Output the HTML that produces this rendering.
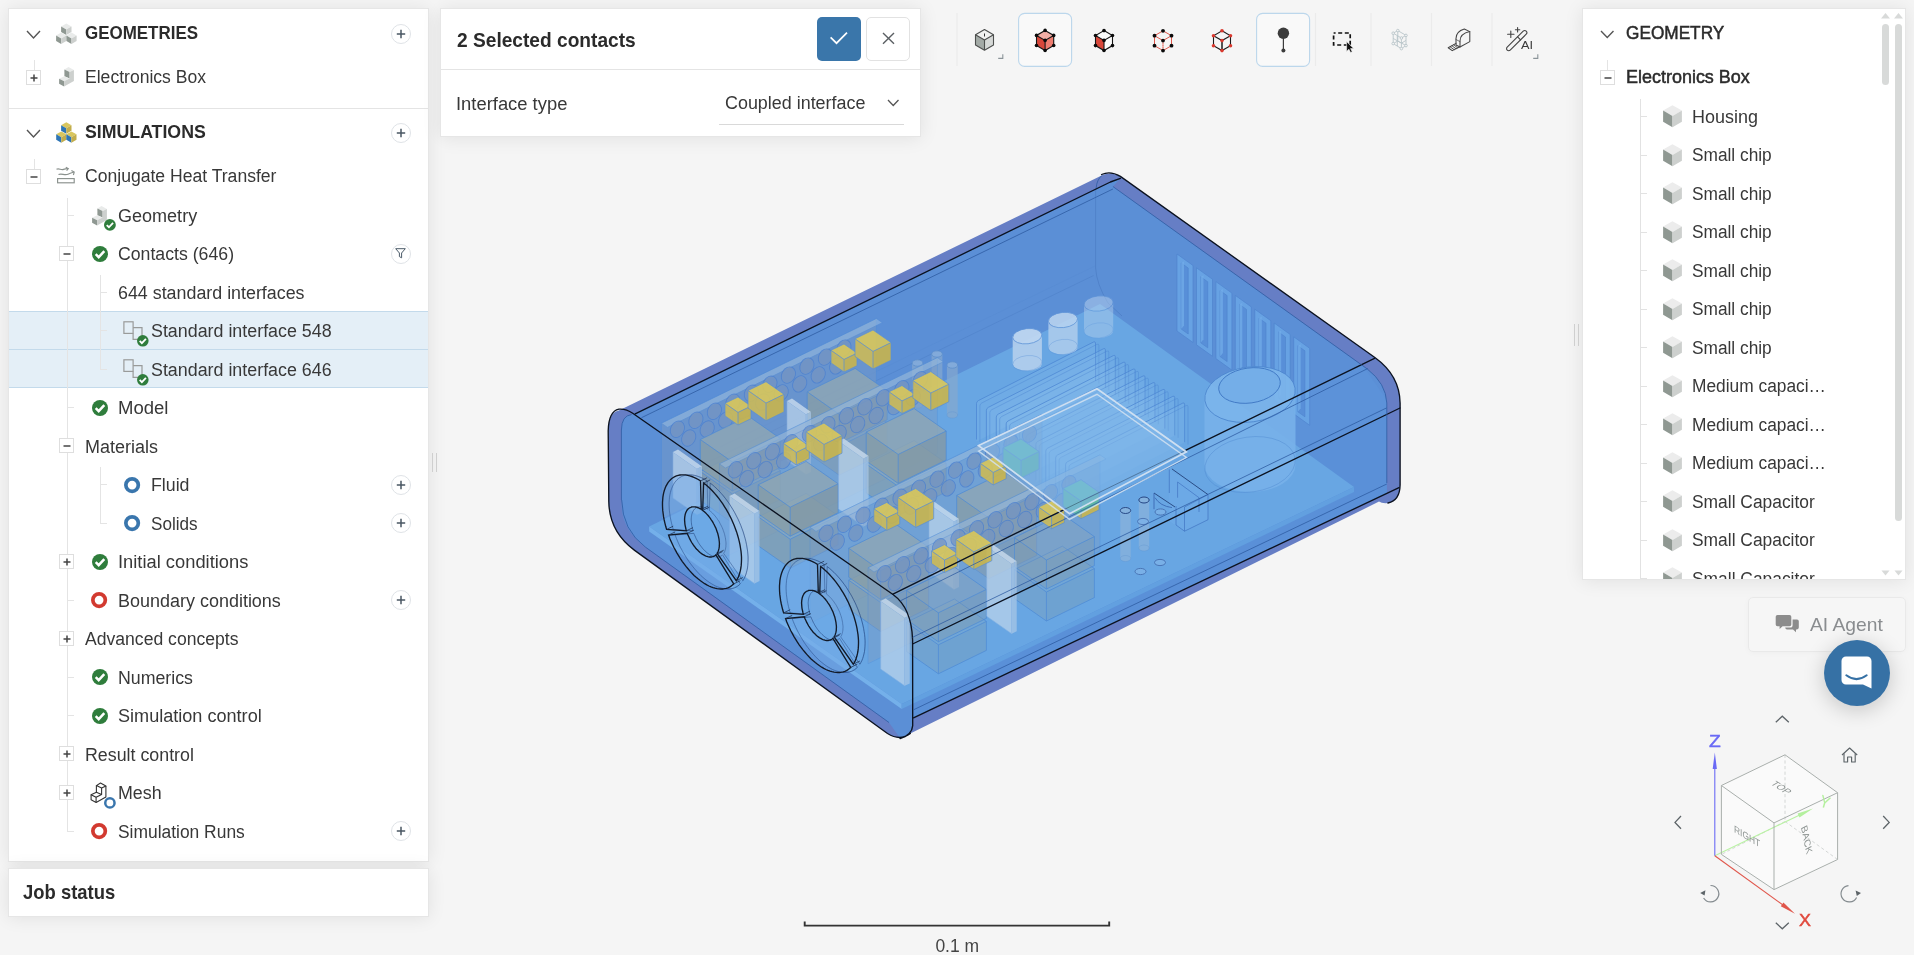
<!DOCTYPE html>
<html lang="en"><head><meta charset="utf-8"><title>Workbench</title>
<style>
html,body{margin:0;padding:0;}
body{width:1914px;height:955px;overflow:hidden;background:#f5f5f5;font-family:"Liberation Sans",sans-serif;}
#app{position:relative;width:1914px;height:955px;overflow:hidden;background:transparent;will-change:transform;}
.a,.t,.ln,.panel,.pb,.eb{position:absolute;}
.t{white-space:nowrap;line-height:1;transform-origin:0 50%;}
.panel{background:#fff;border:1px solid #e6e6e6;box-shadow:0 1px 18px rgba(0,0,0,0.085);}
.pb{width:20px;height:20px;box-sizing:border-box;border:1px solid #dfe3e7;border-radius:50%;background:#fff;}
.eb{width:15px;height:15px;box-sizing:border-box;border:1px solid #dedede;background:#fff;}
svg{display:block;overflow:visible;}

</style></head>
<body>
<div id="app">
<div class="panel" style="left:8px;top:8px;width:419px;height:852px"></div>
<div class="panel" style="left:8px;top:868px;width:419px;height:47px"></div>
<div class="ln" style="left:9px;top:108px;width:419px;height:1px;background:#e4e4e4"></div>
<div class="a" style="left:9px;top:311px;width:419px;height:39px;background:#e4eff7;border-top:1px solid #c3daeb;border-bottom:1px solid #c3daeb;box-sizing:border-box"></div>
<div class="a" style="left:9px;top:350px;width:419px;height:38px;background:#e4eff7;border-bottom:1px solid #c3daeb;box-sizing:border-box"></div>
<svg class="a" style="left:26.0px;top:29.5px" width="15" height="9" viewBox="-1 -1 15 9"><path d="M0 0 L6.5 7 L13 0" fill="none" stroke="#555" stroke-width="1.4"/></svg>
<div class="a" style="left:55px;top:23px"><svg width="22" height="21" viewBox="0 0 22 21"><polygon points="11.30,0.40 16.50,3.40 11.30,6.40 6.10,3.40" fill="#e9ebea"/><polygon points="6.10,3.40 11.30,6.40 11.30,12.00 6.10,9.00" fill="#8f9892"/><polygon points="11.30,6.40 16.50,3.40 16.50,9.00 11.30,12.00" fill="#cdd0ce"/><polygon points="6.20,9.60 11.30,12.54 6.20,15.49 1.10,12.54" fill="#e9ebea"/><polygon points="1.10,12.54 6.20,15.49 6.20,20.89 1.10,17.94" fill="#8f9892"/><polygon points="6.20,15.49 11.30,12.54 11.30,17.94 6.20,20.89" fill="#cdd0ce"/><polygon points="16.50,9.60 21.60,12.54 16.50,15.49 11.40,12.54" fill="#e9ebea"/><polygon points="11.40,12.54 16.50,15.49 16.50,20.89 11.40,17.94" fill="#8f9892"/><polygon points="16.50,15.49 21.60,12.54 21.60,17.94 16.50,20.89" fill="#cdd0ce"/></svg></div>
<span class="t" style="left:85.32px;top:24.3px;font-size:18px;transform:scaleX(0.9420);color:#2b2b2b;font-weight:700;">GEOMETRIES</span>
<div class="pb" style="left:390.5px;top:23.5px"></div><svg class="a" style="left:394.5px;top:27.5px" width="12" height="12" viewBox="-6 -6 12 12"><path d="M-4.2 0 H4.2 M0 -4.2 V4.2" stroke="#4a5763" stroke-width="1.5" fill="none"/></svg>
<div class="ln" style="left:34px;top:60px;width:1px;height:10px;background:#e4e4e4"></div>
<div class="eb" style="left:26px;top:70px"></div><svg class="a" style="left:27.5px;top:71.5px" width="12" height="12" viewBox="-6 -6 12 12"><path d="M-3.5 0 H3.5 M0 -3.5 V3.5" stroke="#444" stroke-width="1.5" fill="none"/></svg>
<div class="a" style="left:59px;top:67.3px"><svg width="16" height="20" viewBox="0 0 16 20"><polygon points="9.5,0 14.9,2.9 10.6,5.1 5.4,2.6" fill="#e9ebea"/><polygon points="5.4,2.6 10.6,5.1 10.6,11.4 5.4,9.2" fill="#8f9892"/><polygon points="0.1,11.7 5.4,9.2 10.6,11.4 5.1,14.3" fill="#e9ebea"/><polygon points="0.1,11.7 5.1,14.3 5.1,19.4 0.1,16.8" fill="#8f9892"/><polygon points="10.6,5.1 14.9,2.9 14.9,13.9 5.1,19.4 5.1,14.3 10.6,11.4" fill="#cdd0ce"/></svg></div>
<span class="t" style="left:85.16px;top:68.4px;font-size:18px;transform:scaleX(0.9755);color:#383838;">Electronics Box</span>
<svg class="a" style="left:26.0px;top:128.5px" width="15" height="9" viewBox="-1 -1 15 9"><path d="M0 0 L6.5 7 L13 0" fill="none" stroke="#555" stroke-width="1.4"/></svg>
<div class="a" style="left:55px;top:122px"><svg width="22" height="21" viewBox="0 0 22 21"><polygon points="11.30,0.20 16.50,3.20 11.30,6.20 6.10,3.20" fill="#d9c65e"/><polygon points="6.10,3.20 11.30,6.20 11.30,11.80 6.10,8.80" fill="#2e75b5"/><polygon points="11.30,6.20 16.50,3.20 16.50,8.80 11.30,11.80" fill="#c2ad4c"/><polygon points="6.30,9.40 11.40,12.34 6.30,15.29 1.20,12.34" fill="#d9c65e"/><polygon points="1.20,12.34 6.30,15.29 6.30,20.69 1.20,17.74" fill="#2e75b5"/><polygon points="6.30,15.29 11.40,12.34 11.40,17.74 6.30,20.69" fill="#c2ad4c"/><polygon points="16.40,9.40 21.50,12.34 16.40,15.29 11.30,12.34" fill="#d9c65e"/><polygon points="11.30,12.34 16.40,15.29 16.40,20.69 11.30,17.74" fill="#2e75b5"/><polygon points="16.40,15.29 21.50,12.34 21.50,17.74 16.40,20.69" fill="#c2ad4c"/></svg></div>
<span class="t" style="left:85.28px;top:123.3px;font-size:18px;transform:scaleX(0.9846);color:#2b2b2b;font-weight:700;">SIMULATIONS</span>
<div class="pb" style="left:390.5px;top:122.5px"></div><svg class="a" style="left:394.5px;top:126.5px" width="12" height="12" viewBox="-6 -6 12 12"><path d="M-4.2 0 H4.2 M0 -4.2 V4.2" stroke="#4a5763" stroke-width="1.5" fill="none"/></svg>
<div class="ln" style="left:34px;top:159px;width:1px;height:10px;background:#e4e4e4"></div>
<div class="eb" style="left:26px;top:169px"></div><svg class="a" style="left:27.5px;top:170.5px" width="12" height="12" viewBox="-6 -6 12 12"><path d="M-3.5 0 H3.5" stroke="#444" stroke-width="1.5" fill="none"/></svg>
<div class="a" style="left:56px;top:167px"><svg width="19" height="17" viewBox="0 0 19 17"><g fill="none" stroke="#8a918d" stroke-width="1.15"><path d="M0.5 2.2 C3 0.8 5 3.4 7.5 2.4 S10.5 1.4 12 1.6"/><path d="M9.8 0.3 L12.3 1.6 L10.6 3.6"/><path d="M2.5 7.6 C5.5 5.8 8.5 8.8 12 7.2 S16 5.6 18 5.2"/><path d="M15.4 3.6 L18.2 5.1 L17.4 8"/><rect x="1.6" y="11.6" width="16.6" height="4.2"/></g></svg></div>
<span class="t" style="left:85.02px;top:167.4px;font-size:18px;transform:scaleX(0.9763);color:#383838;">Conjugate Heat Transfer</span>
<div class="ln" style="left:67px;top:198px;width:1px;height:634px;background:#e4e4e4"></div>
<div class="ln" style="left:100px;top:275px;width:1px;height:95px;background:#e4e4e4"></div>
<div class="ln" style="left:100px;top:467px;width:1px;height:57px;background:#e4e4e4"></div>
<div class="ln" style="left:68px;top:215px;width:6px;height:1px;background:#e4e4e4"></div>
<div class="a" style="left:92px;top:205.5px"><svg width="16" height="20" viewBox="0 0 16 20"><polygon points="9.5,0 14.9,2.9 10.6,5.1 5.4,2.6" fill="#e9ebea"/><polygon points="5.4,2.6 10.6,5.1 10.6,11.4 5.4,9.2" fill="#8f9892"/><polygon points="0.1,11.7 5.4,9.2 10.6,11.4 5.1,14.3" fill="#e9ebea"/><polygon points="0.1,11.7 5.1,14.3 5.1,19.4 0.1,16.8" fill="#8f9892"/><polygon points="10.6,5.1 14.9,2.9 14.9,13.9 5.1,19.4 5.1,14.3 10.6,11.4" fill="#cdd0ce"/></svg></div>
<svg class="a" style="left:104.1px;top:219.1px" width="11.8" height="11.8" viewBox="-8 -8 16 16"><circle r="8" fill="#2f7d3c"/><path d="M-4.3 0.2 L-1.3 3.2 L4.3 -2.8" fill="none" stroke="#fff" stroke-width="2.5"/></svg>
<span class="t" style="left:118.00px;top:206.8px;font-size:18px;transform:scaleX(1.0016);color:#383838;">Geometry</span>
<div class="eb" style="left:59px;top:246px"></div><svg class="a" style="left:60.5px;top:247.5px" width="12" height="12" viewBox="-6 -6 12 12"><path d="M-3.5 0 H3.5" stroke="#444" stroke-width="1.5" fill="none"/></svg>
<svg class="a" style="left:91.5px;top:245.5px" width="16" height="16" viewBox="-8 -8 16 16"><circle r="8" fill="#2f7d3c"/><path d="M-4.3 0.2 L-1.3 3.2 L4.3 -2.8" fill="none" stroke="#fff" stroke-width="2.5"/></svg>
<span class="t" style="left:118.02px;top:244.8px;font-size:18px;transform:scaleX(0.9828);color:#383838;">Contacts (646)</span>
<div class="pb" style="left:390.5px;top:243.5px"></div>
<svg class="a" style="left:395px;top:248.0px" width="11" height="11" viewBox="0 0 11 11"><path d="M0.7 0.7 H10.3 L6.6 5 V9.8 L4.4 8.6 V5 Z" fill="none" stroke="#4a5a68" stroke-width="1"/></svg>
<div class="ln" style="left:101px;top:292px;width:6px;height:1px;background:#e4e4e4"></div>
<span class="t" style="left:118.13px;top:283.8px;font-size:18px;transform:scaleX(0.9913);color:#383838;">644 standard interfaces</span>
<div class="ln" style="left:101px;top:330px;width:6px;height:1px;background:#e4e4e4"></div>
<div class="a" style="left:122.5px;top:320.7px"><svg width="20" height="19" viewBox="0 0 20 19"><g fill="none" stroke="#999b9a" stroke-width="1.2"><rect x="0.9" y="0.8" width="9.2" height="11.6"/><path d="M10.1 6.6 H19 V18.3 H10.1 V12.4"/></g></svg></div>
<svg class="a" style="left:137.1px;top:335.2px" width="11.6" height="11.6" viewBox="-8 -8 16 16"><circle r="8" fill="#2f7d3c"/><path d="M-4.3 0.2 L-1.3 3.2 L4.3 -2.8" fill="none" stroke="#fff" stroke-width="2.5"/></svg>
<span class="t" style="left:150.76px;top:321.8px;font-size:18px;transform:scaleX(0.9917);color:#383838;">Standard interface 548</span>
<div class="ln" style="left:101px;top:369px;width:6px;height:1px;background:#e4e4e4"></div>
<div class="a" style="left:122.5px;top:359.2px"><svg width="20" height="19" viewBox="0 0 20 19"><g fill="none" stroke="#999b9a" stroke-width="1.2"><rect x="0.9" y="0.8" width="9.2" height="11.6"/><path d="M10.1 6.6 H19 V18.3 H10.1 V12.4"/></g></svg></div>
<svg class="a" style="left:137.1px;top:373.7px" width="11.6" height="11.6" viewBox="-8 -8 16 16"><circle r="8" fill="#2f7d3c"/><path d="M-4.3 0.2 L-1.3 3.2 L4.3 -2.8" fill="none" stroke="#fff" stroke-width="2.5"/></svg>
<span class="t" style="left:150.76px;top:360.8px;font-size:18px;transform:scaleX(0.9917);color:#383838;">Standard interface 646</span>
<div class="ln" style="left:68px;top:407px;width:6px;height:1px;background:#e4e4e4"></div>
<svg class="a" style="left:91.5px;top:399.5px" width="16" height="16" viewBox="-8 -8 16 16"><circle r="8" fill="#2f7d3c"/><path d="M-4.3 0.2 L-1.3 3.2 L4.3 -2.8" fill="none" stroke="#fff" stroke-width="2.5"/></svg>
<span class="t" style="left:118.08px;top:398.8px;font-size:18px;transform:scaleX(1.0297);color:#383838;">Model</span>
<div class="eb" style="left:59px;top:438px"></div><svg class="a" style="left:60.5px;top:439.5px" width="12" height="12" viewBox="-6 -6 12 12"><path d="M-3.5 0 H3.5" stroke="#444" stroke-width="1.5" fill="none"/></svg>
<span class="t" style="left:85.13px;top:437.8px;font-size:18px;transform:scaleX(0.9982);color:#383838;">Materials</span>
<div class="ln" style="left:101px;top:484px;width:6px;height:1px;background:#e4e4e4"></div>
<svg class="a" style="left:123.9px;top:476.9px" width="16.2" height="16.2" viewBox="-8.1 -8.1 16.2 16.2"><circle r="6.25" fill="#fff" stroke="#3a76ad" stroke-width="3.7"/></svg>
<span class="t" style="left:151.15px;top:475.8px;font-size:18px;transform:scaleX(0.9863);color:#383838;">Fluid</span>
<div class="pb" style="left:390.5px;top:474.5px"></div><svg class="a" style="left:394.5px;top:478.5px" width="12" height="12" viewBox="-6 -6 12 12"><path d="M-4.2 0 H4.2 M0 -4.2 V4.2" stroke="#4a5763" stroke-width="1.5" fill="none"/></svg>
<div class="ln" style="left:101px;top:523px;width:6px;height:1px;background:#e4e4e4"></div>
<svg class="a" style="left:123.9px;top:515.4px" width="16.2" height="16.2" viewBox="-8.1 -8.1 16.2 16.2"><circle r="6.25" fill="#fff" stroke="#3a76ad" stroke-width="3.7"/></svg>
<span class="t" style="left:150.79px;top:514.8px;font-size:18px;transform:scaleX(0.9500);color:#383838;">Solids</span>
<div class="pb" style="left:390.5px;top:513px"></div><svg class="a" style="left:394.5px;top:517px" width="12" height="12" viewBox="-6 -6 12 12"><path d="M-4.2 0 H4.2 M0 -4.2 V4.2" stroke="#4a5763" stroke-width="1.5" fill="none"/></svg>
<div class="eb" style="left:59px;top:554px"></div><svg class="a" style="left:60.5px;top:555.5px" width="12" height="12" viewBox="-6 -6 12 12"><path d="M-3.5 0 H3.5 M0 -3.5 V3.5" stroke="#444" stroke-width="1.5" fill="none"/></svg>
<svg class="a" style="left:91.5px;top:553.5px" width="16" height="16" viewBox="-8 -8 16 16"><circle r="8" fill="#2f7d3c"/><path d="M-4.3 0.2 L-1.3 3.2 L4.3 -2.8" fill="none" stroke="#fff" stroke-width="2.5"/></svg>
<span class="t" style="left:117.97px;top:552.8px;font-size:18px;transform:scaleX(1.0179);color:#383838;">Initial conditions</span>
<div class="ln" style="left:68px;top:600px;width:6px;height:1px;background:#e4e4e4"></div>
<svg class="a" style="left:91.4px;top:592.4px" width="16.2" height="16.2" viewBox="-8.1 -8.1 16.2 16.2"><circle r="6.25" fill="#fff" stroke="#d23a30" stroke-width="3.7"/></svg>
<span class="t" style="left:118.13px;top:591.8px;font-size:18px;transform:scaleX(0.9984);color:#383838;">Boundary conditions</span>
<div class="pb" style="left:390.5px;top:590px"></div><svg class="a" style="left:394.5px;top:594px" width="12" height="12" viewBox="-6 -6 12 12"><path d="M-4.2 0 H4.2 M0 -4.2 V4.2" stroke="#4a5763" stroke-width="1.5" fill="none"/></svg>
<div class="eb" style="left:59px;top:631px"></div><svg class="a" style="left:60.5px;top:632.5px" width="12" height="12" viewBox="-6 -6 12 12"><path d="M-3.5 0 H3.5 M0 -3.5 V3.5" stroke="#444" stroke-width="1.5" fill="none"/></svg>
<span class="t" style="left:85.12px;top:629.8px;font-size:18px;transform:scaleX(0.9768);color:#383838;">Advanced concepts</span>
<div class="ln" style="left:68px;top:677px;width:6px;height:1px;background:#e4e4e4"></div>
<svg class="a" style="left:91.5px;top:669px" width="16" height="16" viewBox="-8 -8 16 16"><circle r="8" fill="#2f7d3c"/><path d="M-4.3 0.2 L-1.3 3.2 L4.3 -2.8" fill="none" stroke="#fff" stroke-width="2.5"/></svg>
<span class="t" style="left:118.15px;top:668.8px;font-size:18px;transform:scaleX(0.9865);color:#383838;">Numerics</span>
<div class="ln" style="left:68px;top:715px;width:6px;height:1px;background:#e4e4e4"></div>
<svg class="a" style="left:91.5px;top:707.5px" width="16" height="16" viewBox="-8 -8 16 16"><circle r="8" fill="#2f7d3c"/><path d="M-4.3 0.2 L-1.3 3.2 L4.3 -2.8" fill="none" stroke="#fff" stroke-width="2.5"/></svg>
<span class="t" style="left:117.75px;top:706.8px;font-size:18px;transform:scaleX(1.0044);color:#383838;">Simulation control</span>
<div class="eb" style="left:59px;top:746px"></div><svg class="a" style="left:60.5px;top:747.5px" width="12" height="12" viewBox="-6 -6 12 12"><path d="M-3.5 0 H3.5 M0 -3.5 V3.5" stroke="#444" stroke-width="1.5" fill="none"/></svg>
<span class="t" style="left:85.14px;top:745.8px;font-size:18px;transform:scaleX(0.9895);color:#383838;">Result control</span>
<div class="eb" style="left:59px;top:785px"></div><svg class="a" style="left:60.5px;top:786.5px" width="12" height="12" viewBox="-6 -6 12 12"><path d="M-3.5 0 H3.5 M0 -3.5 V3.5" stroke="#444" stroke-width="1.5" fill="none"/></svg>
<div class="a" style="left:91.4px;top:783.0px"><svg width="16" height="20" viewBox="0 0 16 20"><polygon points="9.5,0 14.9,2.9 10.6,5.1 5.4,2.6" fill="none" stroke="#333" stroke-width="1.1" stroke-linejoin="round"/><polyline points="5.4,2.6 5.4,9.2" fill="none" stroke="#333" stroke-width="1.1" stroke-linejoin="round"/><polyline points="10.6,5.1 10.6,11.4" fill="none" stroke="#333" stroke-width="1.1" stroke-linejoin="round"/><polygon points="0.1,11.7 5.4,9.2 10.6,11.4 5.1,14.3" fill="none" stroke="#333" stroke-width="1.1" stroke-linejoin="round"/><polyline points="0.1,11.7 0.1,16.8 5.1,19.4 5.1,14.3" fill="none" stroke="#333" stroke-width="1.1" stroke-linejoin="round"/><polyline points="14.9,2.9 14.9,13.9 5.1,19.4" fill="none" stroke="#333" stroke-width="1.1" stroke-linejoin="round"/></svg></div>
<svg class="a" style="left:104.1px;top:797.1px" width="11.8" height="11.8" viewBox="-5.9 -5.9 11.8 11.8"><circle r="4.65" fill="#fff" stroke="#3a76ad" stroke-width="2.5"/></svg>
<span class="t" style="left:118.14px;top:783.8px;font-size:18px;transform:scaleX(0.9909);color:#383838;">Mesh</span>
<div class="ln" style="left:68px;top:831px;width:6px;height:1px;background:#e4e4e4"></div>
<svg class="a" style="left:91.4px;top:823.4px" width="16.2" height="16.2" viewBox="-8.1 -8.1 16.2 16.2"><circle r="6.25" fill="#fff" stroke="#d23a30" stroke-width="3.7"/></svg>
<span class="t" style="left:117.78px;top:822.8px;font-size:18px;transform:scaleX(0.9672);color:#383838;">Simulation Runs</span>
<div class="pb" style="left:390.5px;top:821px"></div><svg class="a" style="left:394.5px;top:825px" width="12" height="12" viewBox="-6 -6 12 12"><path d="M-4.2 0 H4.2 M0 -4.2 V4.2" stroke="#4a5763" stroke-width="1.5" fill="none"/></svg>
<span class="t" style="left:22.96px;top:882.2px;font-size:20.5px;transform:scaleX(0.8989);color:#2b2b2b;font-weight:700;">Job status</span>
<div class="ln" style="left:432px;top:453px;width:1px;height:19px;background:#cfcfcf"></div>
<div class="ln" style="left:436px;top:453px;width:1px;height:19px;background:#cfcfcf"></div>
<svg class="a" style="left:590px;top:160px" width="830" height="590" viewBox="590 160 830 590"><defs><clipPath id="wpclip"><polygon points="978.6,445.6 1097,388.8 1186.4,452 1186.4,457.5 1069.5,519.3 978.6,451.1"/></clipPath></defs><path d="M1101.6 175.6 Q1110.4 170.8 1120.4 176.4 L1375.2 357.8 Q1399.6 375.5 1400.1 403 L1400.1 485 Q1399.8 500.5 1388 503 Q1382 503.6 1379 501.6 L910.3 733.5 Q900.1 741.4 887.5 733.5 L634.3 550.1 Q609.2 531.5 608.8 501.4 L608.2 431 Q608.6 412 618.9 410.4 Z" fill="#667ec5" stroke="none" stroke-width="1" /><path d="M634 413.4 L1110.4 181.8 L1120.4 178.3 L1113 186.6 L1367.3 369 Q1386 383.5 1386.8 403 L1386.8 493 L913.5 717.8 L912.7 725.6 Q911.5 737 900.1 738.2 L889 722.5 L645.3 547 Q622.4 530 621.7 506 L621.4 430 Q621.6 415.6 631.5 414.6 Z" fill="#5b8fd6" stroke="none" stroke-width="1" /><polygon points="912.6,644.0 1386.8,414.4 1386.8,493.4 913.5,717.8" fill="#5a90d8" stroke="none" stroke-width="1" /><polygon points="893.0,593.0 1362.0,364.5 1386.8,400.0 1386.8,414.4 912.6,644.0" fill="#5c92d9" stroke="none" stroke-width="1" /><polygon points="649.2,526.5 1100.0,304.0 1354.0,487.0 901.7,704.0" fill="#68a6e3" stroke="none" stroke-width="1" /><polygon points="649.2,526.5 901.7,704.0 901.7,709.0 649.2,531.5" fill="#74b0ea" stroke="none" stroke-width="1" /><polygon points="901.7,704.0 1354.0,487.0 1354.0,492.0 901.7,709.0" fill="#62a0e0" stroke="none" stroke-width="1" /><path d="M1095.6 188 L1095.6 268 Q1096.5 284 1108 303 L1122 316" fill="none" stroke="#4a7cc4" stroke-width="0.9" opacity="0.75" /><line x1="700.0" y1="466.0" x2="1093.6" y2="275.5" stroke="#4a7cc4" stroke-width="0.8" opacity="0.55" /><line x1="720.0" y1="447.0" x2="1095.0" y2="266.0" stroke="#5387cf" stroke-width="0.7" opacity="0.4" /><polygon points="1177.0,254.0 1193.0,265.5 1193.0,342.5 1177.0,331.0" fill="#6aa6e6" stroke="#4d83cd" stroke-width="0.7" opacity="0.85" /><polygon points="1181.2,263.0 1188.2,268.0 1188.2,334.0 1181.2,329.0" fill="#588fd8" stroke="#4d83cd" stroke-width="0.6" /><polygon points="1181.2,263.0 1184.0,261.4 1184.0,325.4 1181.2,329.0" fill="#74aeea" stroke="none" stroke-width="1" opacity="0.7" /><polygon points="1196.5,267.8 1212.5,279.3 1212.5,356.3 1196.5,344.8" fill="#6aa6e6" stroke="#4d83cd" stroke-width="0.7" opacity="0.85" /><polygon points="1200.7,276.8 1207.7,281.8 1207.7,347.8 1200.7,342.8" fill="#588fd8" stroke="#4d83cd" stroke-width="0.6" /><polygon points="1200.7,276.8 1203.5,275.2 1203.5,339.2 1200.7,342.8" fill="#74aeea" stroke="none" stroke-width="1" opacity="0.7" /><polygon points="1215.9,281.6 1231.9,293.1 1231.9,370.1 1215.9,358.6" fill="#6aa6e6" stroke="#4d83cd" stroke-width="0.7" opacity="0.85" /><polygon points="1220.1,290.6 1227.1,295.6 1227.1,361.6 1220.1,356.6" fill="#588fd8" stroke="#4d83cd" stroke-width="0.6" /><polygon points="1220.1,290.6 1222.9,289.0 1222.9,353.0 1220.1,356.6" fill="#74aeea" stroke="none" stroke-width="1" opacity="0.7" /><polygon points="1235.3,295.4 1251.3,306.9 1251.3,383.9 1235.3,372.4" fill="#6aa6e6" stroke="#4d83cd" stroke-width="0.7" opacity="0.85" /><polygon points="1239.5,304.4 1246.5,309.4 1246.5,375.4 1239.5,370.4" fill="#588fd8" stroke="#4d83cd" stroke-width="0.6" /><polygon points="1239.5,304.4 1242.3,302.8 1242.3,366.8 1239.5,370.4" fill="#74aeea" stroke="none" stroke-width="1" opacity="0.7" /><polygon points="1254.8,309.2 1270.8,320.7 1270.8,397.7 1254.8,386.2" fill="#6aa6e6" stroke="#4d83cd" stroke-width="0.7" opacity="0.85" /><polygon points="1259.0,318.2 1266.0,323.2 1266.0,389.2 1259.0,384.2" fill="#588fd8" stroke="#4d83cd" stroke-width="0.6" /><polygon points="1259.0,318.2 1261.8,316.6 1261.8,380.6 1259.0,384.2" fill="#74aeea" stroke="none" stroke-width="1" opacity="0.7" /><polygon points="1274.2,323.0 1290.2,334.5 1290.2,411.5 1274.2,400.0" fill="#6aa6e6" stroke="#4d83cd" stroke-width="0.7" opacity="0.85" /><polygon points="1278.5,332.0 1285.5,337.0 1285.5,403.0 1278.5,398.0" fill="#588fd8" stroke="#4d83cd" stroke-width="0.6" /><polygon points="1278.5,332.0 1281.2,330.4 1281.2,394.4 1278.5,398.0" fill="#74aeea" stroke="none" stroke-width="1" opacity="0.7" /><polygon points="1293.7,336.8 1309.7,348.3 1309.7,425.3 1293.7,413.8" fill="#6aa6e6" stroke="#4d83cd" stroke-width="0.7" opacity="0.85" /><polygon points="1297.9,345.8 1304.9,350.8 1304.9,416.8 1297.9,411.8" fill="#588fd8" stroke="#4d83cd" stroke-width="0.6" /><polygon points="1297.9,345.8 1300.7,344.2 1300.7,408.2 1297.9,411.8" fill="#74aeea" stroke="none" stroke-width="1" opacity="0.7" /><g opacity="0.9"><path d="M1204.5 394.5 V464.5 A45.5 27.5 0 0 0 1295.5 464.5 V394.5 Z" fill="#78b2ea" stroke="none" stroke-width="1" /><ellipse cx="1250" cy="464.5" rx="45.5" ry="27.5" fill="none" stroke="#4d86cf" stroke-width="0.7200000000000001" opacity="0.6" transform="rotate(-8 1250 464.5)"/><ellipse cx="1250" cy="394.5" rx="45.5" ry="27.5" fill="#7db6ec" stroke="#4d86cf" stroke-width="0.9" transform="rotate(-8 1250 394.5)"/></g><ellipse cx="1249.5" cy="385.5" rx="31" ry="17.5" fill="#74aee8" stroke="#3f78c4" stroke-width="0.9" transform="rotate(-8 1249.5 385.5)"/><polygon points="976.5,401.5 1095.5,341.0 1095.5,381.0 976.5,441.5" fill="#9ccaf4" stroke="none" stroke-width="1" opacity="0.15" /><path d="M976.5 439.5 V403.5 Q976.5 401.5 978.5 400.5 L1093.5 342.0 Q1095.5 341.0 1095.5 343.0 V381.0" fill="none" stroke="#4a84d2" stroke-width="0.9" opacity="0.8" /><path d="M979.9 441.9 V405.9 Q979.9 403.9 981.9 402.9 L1096.9 344.4 Q1098.9 343.4 1098.9 345.4 V383.4" fill="none" stroke="#4a84d2" stroke-width="0.7" opacity="0.6" /><polygon points="986.4,408.3 1105.4,347.8 1105.4,387.8 986.4,448.3" fill="#9ccaf4" stroke="none" stroke-width="1" opacity="0.15" /><path d="M986.4 446.3 V410.3 Q986.4 408.3 988.4 407.3 L1103.4 348.8 Q1105.4 347.8 1105.4 349.8 V387.8" fill="none" stroke="#4a84d2" stroke-width="0.9" opacity="0.8" /><path d="M989.8 448.7 V412.7 Q989.8 410.7 991.8 409.7 L1106.8 351.2 Q1108.8 350.2 1108.8 352.2 V390.2" fill="none" stroke="#4a84d2" stroke-width="0.7" opacity="0.6" /><polygon points="996.3,415.1 1115.3,354.6 1115.3,394.6 996.3,455.1" fill="#9ccaf4" stroke="none" stroke-width="1" opacity="0.15" /><path d="M996.3 453.1 V417.1 Q996.3 415.1 998.3 414.1 L1113.3 355.6 Q1115.3 354.6 1115.3 356.6 V394.6" fill="none" stroke="#4a84d2" stroke-width="0.9" opacity="0.8" /><path d="M999.7 455.5 V419.5 Q999.7 417.5 1001.7 416.5 L1116.7 358.0 Q1118.7 357.0 1118.7 359.0 V397.0" fill="none" stroke="#4a84d2" stroke-width="0.7" opacity="0.6" /><polygon points="1006.2,421.9 1125.2,361.4 1125.2,401.4 1006.2,461.9" fill="#9ccaf4" stroke="none" stroke-width="1" opacity="0.15" /><path d="M1006.2 459.9 V423.9 Q1006.2 421.9 1008.2 420.9 L1123.2 362.4 Q1125.2 361.4 1125.2 363.4 V401.4" fill="none" stroke="#4a84d2" stroke-width="0.9" opacity="0.8" /><path d="M1009.6 462.3 V426.3 Q1009.6 424.3 1011.6 423.3 L1126.6 364.8 Q1128.6 363.8 1128.6 365.8 V403.8" fill="none" stroke="#4a84d2" stroke-width="0.7" opacity="0.6" /><polygon points="1016.1,428.7 1135.1,368.2 1135.1,408.2 1016.1,468.7" fill="#9ccaf4" stroke="none" stroke-width="1" opacity="0.15" /><path d="M1016.1 466.7 V430.7 Q1016.1 428.7 1018.1 427.7 L1133.1 369.2 Q1135.1 368.2 1135.1 370.2 V408.2" fill="none" stroke="#4a84d2" stroke-width="0.9" opacity="0.8" /><path d="M1019.5 469.1 V433.1 Q1019.5 431.1 1021.5 430.1 L1136.5 371.6 Q1138.5 370.6 1138.5 372.6 V410.6" fill="none" stroke="#4a84d2" stroke-width="0.7" opacity="0.6" /><polygon points="1026.0,435.5 1145.0,375.0 1145.0,415.0 1026.0,475.5" fill="#9ccaf4" stroke="none" stroke-width="1" opacity="0.15" /><path d="M1026.0 473.5 V437.5 Q1026.0 435.5 1028.0 434.5 L1143.0 376.0 Q1145.0 375.0 1145.0 377.0 V415.0" fill="none" stroke="#4a84d2" stroke-width="0.9" opacity="0.8" /><path d="M1029.4 475.9 V439.9 Q1029.4 437.9 1031.4 436.9 L1146.4 378.4 Q1148.4 377.4 1148.4 379.4 V417.4" fill="none" stroke="#4a84d2" stroke-width="0.7" opacity="0.6" /><polygon points="1035.9,442.3 1154.9,381.8 1154.9,421.8 1035.9,482.3" fill="#9ccaf4" stroke="none" stroke-width="1" opacity="0.15" /><path d="M1035.9 480.3 V444.3 Q1035.9 442.3 1037.9 441.3 L1152.9 382.8 Q1154.9 381.8 1154.9 383.8 V421.8" fill="none" stroke="#4a84d2" stroke-width="0.9" opacity="0.8" /><path d="M1039.3 482.7 V446.7 Q1039.3 444.7 1041.3 443.7 L1156.3 385.2 Q1158.3 384.2 1158.3 386.2 V424.2" fill="none" stroke="#4a84d2" stroke-width="0.7" opacity="0.6" /><polygon points="1045.8,449.1 1164.8,388.6 1164.8,428.6 1045.8,489.1" fill="#9ccaf4" stroke="none" stroke-width="1" opacity="0.15" /><path d="M1045.8 487.1 V451.1 Q1045.8 449.1 1047.8 448.1 L1162.8 389.6 Q1164.8 388.6 1164.8 390.6 V428.6" fill="none" stroke="#4a84d2" stroke-width="0.9" opacity="0.8" /><path d="M1049.2 489.5 V453.5 Q1049.2 451.5 1051.2 450.5 L1166.2 392.0 Q1168.2 391.0 1168.2 393.0 V431.0" fill="none" stroke="#4a84d2" stroke-width="0.7" opacity="0.6" /><polygon points="1055.7,455.9 1174.7,395.4 1174.7,435.4 1055.7,495.9" fill="#9ccaf4" stroke="none" stroke-width="1" opacity="0.15" /><path d="M1055.7 493.9 V457.9 Q1055.7 455.9 1057.7 454.9 L1172.7 396.4 Q1174.7 395.4 1174.7 397.4 V435.4" fill="none" stroke="#4a84d2" stroke-width="0.9" opacity="0.8" /><path d="M1059.1 496.3 V460.3 Q1059.1 458.3 1061.1 457.3 L1176.1 398.8 Q1178.1 397.8 1178.1 399.8 V437.8" fill="none" stroke="#4a84d2" stroke-width="0.7" opacity="0.6" /><polygon points="1065.6,462.7 1184.6,402.2 1184.6,442.2 1065.6,502.7" fill="#9ccaf4" stroke="none" stroke-width="1" opacity="0.15" /><path d="M1065.6 500.7 V464.7 Q1065.6 462.7 1067.6 461.7 L1182.6 403.2 Q1184.6 402.2 1184.6 404.2 V442.2" fill="none" stroke="#4a84d2" stroke-width="0.9" opacity="0.8" /><path d="M1069.0 503.1 V467.1 Q1069.0 465.1 1071.0 464.1 L1186.0 405.6 Q1188.0 404.6 1188.0 406.6 V444.6" fill="none" stroke="#4a84d2" stroke-width="0.7" opacity="0.6" /><g opacity="0.45"><path d="M1084.0 303.5 V330.5 A14.6 7.6 0 0 0 1113.1999999999998 330.5 V303.5 Z" fill="#b4d0ee" stroke="none" stroke-width="1" /><ellipse cx="1098.6" cy="330.5" rx="14.6" ry="7.6" fill="none" stroke="#5f93d6" stroke-width="0.6400000000000001" opacity="0.6" transform="rotate(-6 1098.6 330.5)"/><ellipse cx="1098.6" cy="303.5" rx="14.6" ry="7.6" fill="#c3daf2" stroke="#5f93d6" stroke-width="0.8" transform="rotate(-6 1098.6 303.5)"/></g><g opacity="0.8"><path d="M1048.4 320 V347 A14.6 7.6 0 0 0 1077.6 347 V320 Z" fill="#b4d0ee" stroke="none" stroke-width="1" /><ellipse cx="1063" cy="347" rx="14.6" ry="7.6" fill="none" stroke="#5f93d6" stroke-width="0.6400000000000001" opacity="0.6" transform="rotate(-6 1063 347)"/><ellipse cx="1063" cy="320" rx="14.6" ry="7.6" fill="#c3daf2" stroke="#5f93d6" stroke-width="0.8" transform="rotate(-6 1063 320)"/></g><g opacity="0.9"><path d="M1012.6999999999999 336.2 V363.2 A14.6 7.6 0 0 0 1041.8999999999999 363.2 V336.2 Z" fill="#b4d0ee" stroke="none" stroke-width="1" /><ellipse cx="1027.3" cy="363.2" rx="14.6" ry="7.6" fill="none" stroke="#5f93d6" stroke-width="0.6400000000000001" opacity="0.6" transform="rotate(-6 1027.3 363.2)"/><ellipse cx="1027.3" cy="336.2" rx="14.6" ry="7.6" fill="#c3daf2" stroke="#5f93d6" stroke-width="0.8" transform="rotate(-6 1027.3 336.2)"/></g><polygon points="661.4,423.2 876.4,318.5 876.4,414.5 661.4,519.2" fill="#7c9cc4" stroke="#4d8ad6" stroke-width="0.8" opacity="0.42" /><polygon points="661.4,423.2 876.4,318.5 882.4,322.7 667.4,427.4" fill="#9dc0e2" stroke="#4d8ad6" stroke-width="0.7" opacity="0.5" /><ellipse cx="677.4" cy="429.2" rx="6.7" ry="8.6" fill="#7595c2" stroke="#4a7fd0" stroke-width="0.9" opacity="0.75" transform="rotate(28 677.4 429.2)"/><ellipse cx="695.9" cy="420.2" rx="6.7" ry="8.6" fill="#7595c2" stroke="#4a7fd0" stroke-width="0.9" opacity="0.75" transform="rotate(28 695.9 420.2)"/><ellipse cx="714.4" cy="411.2" rx="6.7" ry="8.6" fill="#7595c2" stroke="#4a7fd0" stroke-width="0.9" opacity="0.75" transform="rotate(28 714.4 411.2)"/><ellipse cx="732.9" cy="402.2" rx="6.7" ry="8.6" fill="#7595c2" stroke="#4a7fd0" stroke-width="0.9" opacity="0.75" transform="rotate(28 732.9 402.2)"/><ellipse cx="751.4" cy="393.2" rx="6.7" ry="8.6" fill="#7595c2" stroke="#4a7fd0" stroke-width="0.9" opacity="0.75" transform="rotate(28 751.4 393.2)"/><ellipse cx="769.9" cy="384.2" rx="6.7" ry="8.6" fill="#7595c2" stroke="#4a7fd0" stroke-width="0.9" opacity="0.75" transform="rotate(28 769.9 384.2)"/><ellipse cx="788.4" cy="375.1" rx="6.7" ry="8.6" fill="#7595c2" stroke="#4a7fd0" stroke-width="0.9" opacity="0.75" transform="rotate(28 788.4 375.1)"/><ellipse cx="806.9" cy="366.1" rx="6.7" ry="8.6" fill="#7595c2" stroke="#4a7fd0" stroke-width="0.9" opacity="0.75" transform="rotate(28 806.9 366.1)"/><ellipse cx="825.4" cy="357.1" rx="6.7" ry="8.6" fill="#7595c2" stroke="#4a7fd0" stroke-width="0.9" opacity="0.75" transform="rotate(28 825.4 357.1)"/><ellipse cx="843.9" cy="348.1" rx="6.7" ry="8.6" fill="#7595c2" stroke="#4a7fd0" stroke-width="0.9" opacity="0.75" transform="rotate(28 843.9 348.1)"/><ellipse cx="688.7" cy="438.0" rx="6.7" ry="8.6" fill="#7595c2" stroke="#4a7fd0" stroke-width="0.9" opacity="0.75" transform="rotate(28 688.7 438.0)"/><ellipse cx="707.2" cy="429.0" rx="6.7" ry="8.6" fill="#7595c2" stroke="#4a7fd0" stroke-width="0.9" opacity="0.75" transform="rotate(28 707.2 429.0)"/><ellipse cx="725.7" cy="420.0" rx="6.7" ry="8.6" fill="#7595c2" stroke="#4a7fd0" stroke-width="0.9" opacity="0.75" transform="rotate(28 725.7 420.0)"/><ellipse cx="744.2" cy="411.0" rx="6.7" ry="8.6" fill="#7595c2" stroke="#4a7fd0" stroke-width="0.9" opacity="0.75" transform="rotate(28 744.2 411.0)"/><ellipse cx="762.7" cy="402.0" rx="6.7" ry="8.6" fill="#7595c2" stroke="#4a7fd0" stroke-width="0.9" opacity="0.75" transform="rotate(28 762.7 402.0)"/><ellipse cx="781.2" cy="392.9" rx="6.7" ry="8.6" fill="#7595c2" stroke="#4a7fd0" stroke-width="0.9" opacity="0.75" transform="rotate(28 781.2 392.9)"/><ellipse cx="799.7" cy="383.9" rx="6.7" ry="8.6" fill="#7595c2" stroke="#4a7fd0" stroke-width="0.9" opacity="0.75" transform="rotate(28 799.7 383.9)"/><ellipse cx="818.2" cy="374.9" rx="6.7" ry="8.6" fill="#7595c2" stroke="#4a7fd0" stroke-width="0.9" opacity="0.75" transform="rotate(28 818.2 374.9)"/><ellipse cx="836.7" cy="365.9" rx="6.7" ry="8.6" fill="#7595c2" stroke="#4a7fd0" stroke-width="0.9" opacity="0.75" transform="rotate(28 836.7 365.9)"/><polygon points="700.3,471.5 748.3,448.1 780.3,470.5 732.3,493.9" fill="#8ea6b4" stroke="none" stroke-width="1" opacity="0.68" /><polygon points="700.3,471.5 732.3,493.9 732.3,522.9 700.3,500.5" fill="#879da8" stroke="none" stroke-width="1" opacity="0.68" /><polygon points="732.3,493.9 780.3,470.5 780.3,499.5 732.3,522.9" fill="#8399a4" stroke="none" stroke-width="1" opacity="0.68" /><g fill="none" stroke="#4d8ad6" stroke-width="0.8" opacity="0.9" stroke-linejoin="round"><polygon points="700.3,471.5 748.3,448.1 780.3,470.5 780.3,499.5 732.3,522.9 700.3,500.5"/><polyline points="700.3,471.5 732.3,493.9 780.3,470.5"/><line x1="732.3" y1="493.9" x2="732.3" y2="522.9"/></g><polygon points="700.3,439.5 748.3,416.1 780.3,438.5 732.3,461.9" fill="#8ea6b4" stroke="none" stroke-width="1" opacity="0.8" /><polygon points="700.3,439.5 732.3,461.9 732.3,490.9 700.3,468.5" fill="#879da8" stroke="none" stroke-width="1" opacity="0.8" /><polygon points="732.3,461.9 780.3,438.5 780.3,467.5 732.3,490.9" fill="#8399a4" stroke="none" stroke-width="1" opacity="0.8" /><g fill="none" stroke="#4d8ad6" stroke-width="0.8" opacity="0.9" stroke-linejoin="round"><polygon points="700.3,439.5 748.3,416.1 780.3,438.5 780.3,467.5 732.3,490.9 700.3,468.5"/><polyline points="700.3,439.5 732.3,461.9 780.3,438.5"/><line x1="732.3" y1="461.9" x2="732.3" y2="490.9"/></g><polygon points="807.2,423.8 855.2,400.4 887.2,422.8 839.2,446.2" fill="#8ea6b4" stroke="none" stroke-width="1" opacity="0.68" /><polygon points="807.2,423.8 839.2,446.2 839.2,475.2 807.2,452.8" fill="#879da8" stroke="none" stroke-width="1" opacity="0.68" /><polygon points="839.2,446.2 887.2,422.8 887.2,451.8 839.2,475.2" fill="#8399a4" stroke="none" stroke-width="1" opacity="0.68" /><g fill="none" stroke="#4d8ad6" stroke-width="0.8" opacity="0.9" stroke-linejoin="round"><polygon points="807.2,423.8 855.2,400.4 887.2,422.8 887.2,451.8 839.2,475.2 807.2,452.8"/><polyline points="807.2,423.8 839.2,446.2 887.2,422.8"/><line x1="839.2" y1="446.2" x2="839.2" y2="475.2"/></g><polygon points="807.2,391.8 855.2,368.4 887.2,390.8 839.2,414.2" fill="#8ea6b4" stroke="none" stroke-width="1" opacity="0.8" /><polygon points="807.2,391.8 839.2,414.2 839.2,443.2 807.2,420.8" fill="#879da8" stroke="none" stroke-width="1" opacity="0.8" /><polygon points="839.2,414.2 887.2,390.8 887.2,419.8 839.2,443.2" fill="#8399a4" stroke="none" stroke-width="1" opacity="0.8" /><g fill="none" stroke="#4d8ad6" stroke-width="0.8" opacity="0.9" stroke-linejoin="round"><polygon points="807.2,391.8 855.2,368.4 887.2,390.8 887.2,419.8 839.2,443.2 807.2,420.8"/><polyline points="807.2,391.8 839.2,414.2 887.2,390.8"/><line x1="839.2" y1="414.2" x2="839.2" y2="443.2"/></g><polygon points="787.0,401.0 806.0,414.3 806.0,474.3 787.0,461.0" fill="#bcd5ec" stroke="#8db6e4" stroke-width="0.6" opacity="0.72" /><polygon points="787.0,401.0 792.0,398.6 811.0,411.9 806.0,414.3" fill="#d2e3f3" stroke="none" stroke-width="1" opacity="0.72" /><polygon points="806.0,414.3 811.0,411.9 811.0,471.9 806.0,474.3" fill="#a9c8e6" stroke="none" stroke-width="1" opacity="0.72" /><polygon points="725.0,403.3 738.0,397.0 751.0,406.1 738.0,412.4" fill="#dcc856" stroke="none" stroke-width="1" opacity="0.88" /><polygon points="725.0,403.3 738.0,412.4 738.0,425.0 725.0,415.9" fill="#cdbb55" stroke="none" stroke-width="1" opacity="0.88" /><polygon points="738.0,412.4 751.0,406.1 751.0,418.7 738.0,425.0" fill="#c9b54a" stroke="none" stroke-width="1" opacity="0.88" /><g fill="none" stroke="#5b8fd6" stroke-width="0.8" opacity="0.9" stroke-linejoin="round"><polygon points="725.0,403.3 738.0,397.0 751.0,406.1 751.0,418.7 738.0,425.0 725.0,415.9"/><polyline points="725.0,403.3 738.0,412.4 751.0,406.1"/><line x1="738.0" y1="412.4" x2="738.0" y2="425.0"/></g><polygon points="748.0,390.5 766.0,381.7 784.0,394.3 766.0,403.1" fill="#dcc856" stroke="none" stroke-width="1" opacity="0.88" /><polygon points="748.0,390.5 766.0,403.1 766.0,420.7 748.0,408.1" fill="#cdbb55" stroke="none" stroke-width="1" opacity="0.88" /><polygon points="766.0,403.1 784.0,394.3 784.0,411.9 766.0,420.7" fill="#c9b54a" stroke="none" stroke-width="1" opacity="0.88" /><g fill="none" stroke="#5b8fd6" stroke-width="0.8" opacity="0.9" stroke-linejoin="round"><polygon points="748.0,390.5 766.0,381.7 784.0,394.3 784.0,411.9 766.0,420.7 748.0,408.1"/><polyline points="748.0,390.5 766.0,403.1 784.0,394.3"/><line x1="766.0" y1="403.1" x2="766.0" y2="420.7"/></g><polygon points="831.0,350.3 844.0,344.0 857.0,353.1 844.0,359.4" fill="#dcc856" stroke="none" stroke-width="1" opacity="0.88" /><polygon points="831.0,350.3 844.0,359.4 844.0,372.0 831.0,362.9" fill="#cdbb55" stroke="none" stroke-width="1" opacity="0.88" /><polygon points="844.0,359.4 857.0,353.1 857.0,365.7 844.0,372.0" fill="#c9b54a" stroke="none" stroke-width="1" opacity="0.88" /><g fill="none" stroke="#5b8fd6" stroke-width="0.8" opacity="0.9" stroke-linejoin="round"><polygon points="831.0,350.3 844.0,344.0 857.0,353.1 857.0,365.7 844.0,372.0 831.0,362.9"/><polyline points="831.0,350.3 844.0,359.4 857.0,353.1"/><line x1="844.0" y1="359.4" x2="844.0" y2="372.0"/></g><polygon points="855.0,338.8 873.0,330.0 891.0,342.6 873.0,351.4" fill="#dcc856" stroke="none" stroke-width="1" opacity="0.88" /><polygon points="855.0,338.8 873.0,351.4 873.0,369.0 855.0,356.4" fill="#cdbb55" stroke="none" stroke-width="1" opacity="0.88" /><polygon points="873.0,351.4 891.0,342.6 891.0,360.2 873.0,369.0" fill="#c9b54a" stroke="none" stroke-width="1" opacity="0.88" /><g fill="none" stroke="#5b8fd6" stroke-width="0.8" opacity="0.9" stroke-linejoin="round"><polygon points="855.0,338.8 873.0,330.0 891.0,342.6 891.0,360.2 873.0,369.0 855.0,356.4"/><polyline points="855.0,338.8 873.0,351.4 891.0,342.6"/><line x1="873.0" y1="351.4" x2="873.0" y2="369.0"/></g><g opacity="0.7"><path d="M912.1 363 V405 A5.4 3.2 0 0 0 922.9 405 V363 Z" fill="#86a9cf" stroke="none" stroke-width="1" /><ellipse cx="917.5" cy="405" rx="5.4" ry="3.2" fill="none" stroke="#5e8fc8" stroke-width="0.6400000000000001" opacity="0.6"/><ellipse cx="917.5" cy="363" rx="5.4" ry="3.2" fill="#93b6dc" stroke="#5e8fc8" stroke-width="0.8"/></g><g opacity="0.7"><path d="M931.6 354 V404 A5.4 3.2 0 0 0 942.4 404 V354 Z" fill="#86a9cf" stroke="none" stroke-width="1" /><ellipse cx="937" cy="404" rx="5.4" ry="3.2" fill="none" stroke="#5e8fc8" stroke-width="0.6400000000000001" opacity="0.6"/><ellipse cx="937" cy="354" rx="5.4" ry="3.2" fill="#93b6dc" stroke="#5e8fc8" stroke-width="0.8"/></g><g opacity="0.7"><path d="M946.9 365 V415 A5.4 3.2 0 0 0 957.6999999999999 415 V365 Z" fill="#86a9cf" stroke="none" stroke-width="1" /><ellipse cx="952.3" cy="415" rx="5.4" ry="3.2" fill="none" stroke="#5e8fc8" stroke-width="0.6400000000000001" opacity="0.6"/><ellipse cx="952.3" cy="365" rx="5.4" ry="3.2" fill="#93b6dc" stroke="#5e8fc8" stroke-width="0.8"/></g><polygon points="673.0,452.0 697.0,468.8 697.0,514.8 673.0,498.0" fill="#bcd5ec" stroke="#8db6e4" stroke-width="0.6" opacity="0.72" /><polygon points="673.0,452.0 678.0,449.6 702.0,466.4 697.0,468.8" fill="#d2e3f3" stroke="none" stroke-width="1" opacity="0.72" /><polygon points="697.0,468.8 702.0,466.4 702.0,512.4 697.0,514.8" fill="#a9c8e6" stroke="none" stroke-width="1" opacity="0.72" /><polygon points="719.4,463.8 937.4,357.6 937.4,453.6 719.4,559.8" fill="#7c9cc4" stroke="#4d8ad6" stroke-width="0.8" opacity="0.42" /><polygon points="719.4,463.8 937.4,357.6 943.4,361.8 725.4,468.0" fill="#9dc0e2" stroke="#4d8ad6" stroke-width="0.7" opacity="0.5" /><ellipse cx="735.4" cy="469.8" rx="6.7" ry="8.6" fill="#7595c2" stroke="#4a7fd0" stroke-width="0.9" opacity="0.75" transform="rotate(28 735.4 469.8)"/><ellipse cx="753.9" cy="460.8" rx="6.7" ry="8.6" fill="#7595c2" stroke="#4a7fd0" stroke-width="0.9" opacity="0.75" transform="rotate(28 753.9 460.8)"/><ellipse cx="772.4" cy="451.8" rx="6.7" ry="8.6" fill="#7595c2" stroke="#4a7fd0" stroke-width="0.9" opacity="0.75" transform="rotate(28 772.4 451.8)"/><ellipse cx="790.9" cy="442.8" rx="6.7" ry="8.6" fill="#7595c2" stroke="#4a7fd0" stroke-width="0.9" opacity="0.75" transform="rotate(28 790.9 442.8)"/><ellipse cx="809.4" cy="433.8" rx="6.7" ry="8.6" fill="#7595c2" stroke="#4a7fd0" stroke-width="0.9" opacity="0.75" transform="rotate(28 809.4 433.8)"/><ellipse cx="827.9" cy="424.8" rx="6.7" ry="8.6" fill="#7595c2" stroke="#4a7fd0" stroke-width="0.9" opacity="0.75" transform="rotate(28 827.9 424.8)"/><ellipse cx="846.4" cy="415.7" rx="6.7" ry="8.6" fill="#7595c2" stroke="#4a7fd0" stroke-width="0.9" opacity="0.75" transform="rotate(28 846.4 415.7)"/><ellipse cx="864.9" cy="406.7" rx="6.7" ry="8.6" fill="#7595c2" stroke="#4a7fd0" stroke-width="0.9" opacity="0.75" transform="rotate(28 864.9 406.7)"/><ellipse cx="883.4" cy="397.7" rx="6.7" ry="8.6" fill="#7595c2" stroke="#4a7fd0" stroke-width="0.9" opacity="0.75" transform="rotate(28 883.4 397.7)"/><ellipse cx="901.9" cy="388.7" rx="6.7" ry="8.6" fill="#7595c2" stroke="#4a7fd0" stroke-width="0.9" opacity="0.75" transform="rotate(28 901.9 388.7)"/><ellipse cx="920.4" cy="379.7" rx="6.7" ry="8.6" fill="#7595c2" stroke="#4a7fd0" stroke-width="0.9" opacity="0.75" transform="rotate(28 920.4 379.7)"/><ellipse cx="746.7" cy="478.6" rx="6.7" ry="8.6" fill="#7595c2" stroke="#4a7fd0" stroke-width="0.9" opacity="0.75" transform="rotate(28 746.7 478.6)"/><ellipse cx="765.2" cy="469.6" rx="6.7" ry="8.6" fill="#7595c2" stroke="#4a7fd0" stroke-width="0.9" opacity="0.75" transform="rotate(28 765.2 469.6)"/><ellipse cx="783.7" cy="460.6" rx="6.7" ry="8.6" fill="#7595c2" stroke="#4a7fd0" stroke-width="0.9" opacity="0.75" transform="rotate(28 783.7 460.6)"/><ellipse cx="802.2" cy="451.6" rx="6.7" ry="8.6" fill="#7595c2" stroke="#4a7fd0" stroke-width="0.9" opacity="0.75" transform="rotate(28 802.2 451.6)"/><ellipse cx="820.7" cy="442.6" rx="6.7" ry="8.6" fill="#7595c2" stroke="#4a7fd0" stroke-width="0.9" opacity="0.75" transform="rotate(28 820.7 442.6)"/><ellipse cx="839.2" cy="433.5" rx="6.7" ry="8.6" fill="#7595c2" stroke="#4a7fd0" stroke-width="0.9" opacity="0.75" transform="rotate(28 839.2 433.5)"/><ellipse cx="857.7" cy="424.5" rx="6.7" ry="8.6" fill="#7595c2" stroke="#4a7fd0" stroke-width="0.9" opacity="0.75" transform="rotate(28 857.7 424.5)"/><ellipse cx="876.2" cy="415.5" rx="6.7" ry="8.6" fill="#7595c2" stroke="#4a7fd0" stroke-width="0.9" opacity="0.75" transform="rotate(28 876.2 415.5)"/><ellipse cx="894.7" cy="406.5" rx="6.7" ry="8.6" fill="#7595c2" stroke="#4a7fd0" stroke-width="0.9" opacity="0.75" transform="rotate(28 894.7 406.5)"/><ellipse cx="913.2" cy="397.5" rx="6.7" ry="8.6" fill="#7595c2" stroke="#4a7fd0" stroke-width="0.9" opacity="0.75" transform="rotate(28 913.2 397.5)"/><polygon points="758.2,516.8 806.2,493.4 838.2,515.8 790.2,539.2" fill="#8ea6b4" stroke="none" stroke-width="1" opacity="0.68" /><polygon points="758.2,516.8 790.2,539.2 790.2,568.2 758.2,545.8" fill="#879da8" stroke="none" stroke-width="1" opacity="0.68" /><polygon points="790.2,539.2 838.2,515.8 838.2,544.8 790.2,568.2" fill="#8399a4" stroke="none" stroke-width="1" opacity="0.68" /><g fill="none" stroke="#4d8ad6" stroke-width="0.8" opacity="0.9" stroke-linejoin="round"><polygon points="758.2,516.8 806.2,493.4 838.2,515.8 838.2,544.8 790.2,568.2 758.2,545.8"/><polyline points="758.2,516.8 790.2,539.2 838.2,515.8"/><line x1="790.2" y1="539.2" x2="790.2" y2="568.2"/></g><polygon points="758.2,484.8 806.2,461.4 838.2,483.8 790.2,507.2" fill="#8ea6b4" stroke="none" stroke-width="1" opacity="0.8" /><polygon points="758.2,484.8 790.2,507.2 790.2,536.2 758.2,513.8" fill="#879da8" stroke="none" stroke-width="1" opacity="0.8" /><polygon points="790.2,507.2 838.2,483.8 838.2,512.8 790.2,536.2" fill="#8399a4" stroke="none" stroke-width="1" opacity="0.8" /><g fill="none" stroke="#4d8ad6" stroke-width="0.8" opacity="0.9" stroke-linejoin="round"><polygon points="758.2,484.8 806.2,461.4 838.2,483.8 838.2,512.8 790.2,536.2 758.2,513.8"/><polyline points="758.2,484.8 790.2,507.2 838.2,483.8"/><line x1="790.2" y1="507.2" x2="790.2" y2="536.2"/></g><polygon points="866.2,464.0 914.2,440.6 946.2,463.0 898.2,486.4" fill="#8ea6b4" stroke="none" stroke-width="1" opacity="0.68" /><polygon points="866.2,464.0 898.2,486.4 898.2,515.4 866.2,493.0" fill="#879da8" stroke="none" stroke-width="1" opacity="0.68" /><polygon points="898.2,486.4 946.2,463.0 946.2,492.0 898.2,515.4" fill="#8399a4" stroke="none" stroke-width="1" opacity="0.68" /><g fill="none" stroke="#4d8ad6" stroke-width="0.8" opacity="0.9" stroke-linejoin="round"><polygon points="866.2,464.0 914.2,440.6 946.2,463.0 946.2,492.0 898.2,515.4 866.2,493.0"/><polyline points="866.2,464.0 898.2,486.4 946.2,463.0"/><line x1="898.2" y1="486.4" x2="898.2" y2="515.4"/></g><polygon points="866.2,432.0 914.2,408.6 946.2,431.0 898.2,454.4" fill="#8ea6b4" stroke="none" stroke-width="1" opacity="0.8" /><polygon points="866.2,432.0 898.2,454.4 898.2,483.4 866.2,461.0" fill="#879da8" stroke="none" stroke-width="1" opacity="0.8" /><polygon points="898.2,454.4 946.2,431.0 946.2,460.0 898.2,483.4" fill="#8399a4" stroke="none" stroke-width="1" opacity="0.8" /><g fill="none" stroke="#4d8ad6" stroke-width="0.8" opacity="0.9" stroke-linejoin="round"><polygon points="866.2,432.0 914.2,408.6 946.2,431.0 946.2,460.0 898.2,483.4 866.2,461.0"/><polyline points="866.2,432.0 898.2,454.4 946.2,431.0"/><line x1="898.2" y1="454.4" x2="898.2" y2="483.4"/></g><polygon points="838.6,441.0 863.6,458.5 863.6,526.5 838.6,509.0" fill="#bcd5ec" stroke="#8db6e4" stroke-width="0.6" opacity="0.72" /><polygon points="838.6,441.0 843.6,438.6 868.6,456.1 863.6,458.5" fill="#d2e3f3" stroke="none" stroke-width="1" opacity="0.72" /><polygon points="863.6,458.5 868.6,456.1 868.6,524.1 863.6,526.5" fill="#a9c8e6" stroke="none" stroke-width="1" opacity="0.72" /><polygon points="783.3,443.3 796.3,437.0 809.3,446.1 796.3,452.4" fill="#dcc856" stroke="none" stroke-width="1" opacity="0.88" /><polygon points="783.3,443.3 796.3,452.4 796.3,465.0 783.3,455.9" fill="#cdbb55" stroke="none" stroke-width="1" opacity="0.88" /><polygon points="796.3,452.4 809.3,446.1 809.3,458.7 796.3,465.0" fill="#c9b54a" stroke="none" stroke-width="1" opacity="0.88" /><g fill="none" stroke="#5b8fd6" stroke-width="0.8" opacity="0.9" stroke-linejoin="round"><polygon points="783.3,443.3 796.3,437.0 809.3,446.1 809.3,458.7 796.3,465.0 783.3,455.9"/><polyline points="783.3,443.3 796.3,452.4 809.3,446.1"/><line x1="796.3" y1="452.4" x2="796.3" y2="465.0"/></g><polygon points="806.0,431.8 824.0,423.0 842.0,435.6 824.0,444.4" fill="#dcc856" stroke="none" stroke-width="1" opacity="0.88" /><polygon points="806.0,431.8 824.0,444.4 824.0,462.0 806.0,449.4" fill="#cdbb55" stroke="none" stroke-width="1" opacity="0.88" /><polygon points="824.0,444.4 842.0,435.6 842.0,453.2 824.0,462.0" fill="#c9b54a" stroke="none" stroke-width="1" opacity="0.88" /><g fill="none" stroke="#5b8fd6" stroke-width="0.8" opacity="0.9" stroke-linejoin="round"><polygon points="806.0,431.8 824.0,423.0 842.0,435.6 842.0,453.2 824.0,462.0 806.0,449.4"/><polyline points="806.0,431.8 824.0,444.4 842.0,435.6"/><line x1="824.0" y1="444.4" x2="824.0" y2="462.0"/></g><polygon points="889.0,391.8 902.0,385.5 915.0,394.6 902.0,400.9" fill="#dcc856" stroke="none" stroke-width="1" opacity="0.88" /><polygon points="889.0,391.8 902.0,400.9 902.0,413.5 889.0,404.4" fill="#cdbb55" stroke="none" stroke-width="1" opacity="0.88" /><polygon points="902.0,400.9 915.0,394.6 915.0,407.2 902.0,413.5" fill="#c9b54a" stroke="none" stroke-width="1" opacity="0.88" /><g fill="none" stroke="#5b8fd6" stroke-width="0.8" opacity="0.9" stroke-linejoin="round"><polygon points="889.0,391.8 902.0,385.5 915.0,394.6 915.0,407.2 902.0,413.5 889.0,404.4"/><polyline points="889.0,391.8 902.0,400.9 915.0,394.6"/><line x1="902.0" y1="400.9" x2="902.0" y2="413.5"/></g><polygon points="912.8,380.4 930.8,371.6 948.8,384.2 930.8,393.0" fill="#dcc856" stroke="none" stroke-width="1" opacity="0.88" /><polygon points="912.8,380.4 930.8,393.0 930.8,410.6 912.8,398.0" fill="#cdbb55" stroke="none" stroke-width="1" opacity="0.88" /><polygon points="930.8,393.0 948.8,384.2 948.8,401.8 930.8,410.6" fill="#c9b54a" stroke="none" stroke-width="1" opacity="0.88" /><g fill="none" stroke="#5b8fd6" stroke-width="0.8" opacity="0.9" stroke-linejoin="round"><polygon points="912.8,380.4 930.8,371.6 948.8,384.2 948.8,401.8 930.8,410.6 912.8,398.0"/><polyline points="912.8,380.4 930.8,393.0 948.8,384.2"/><line x1="930.8" y1="393.0" x2="930.8" y2="410.6"/></g><polygon points="729.5,496.0 754.5,513.5 754.5,583.5 729.5,566.0" fill="#bcd5ec" stroke="#8db6e4" stroke-width="0.6" opacity="0.72" /><polygon points="729.5,496.0 734.5,493.6 759.5,511.1 754.5,513.5" fill="#d2e3f3" stroke="none" stroke-width="1" opacity="0.72" /><polygon points="754.5,513.5 759.5,511.1 759.5,581.1 754.5,583.5" fill="#a9c8e6" stroke="none" stroke-width="1" opacity="0.72" /><polygon points="810.0,527.2 1042.0,414.2 1042.0,510.2 810.0,623.2" fill="#7c9cc4" stroke="#4d8ad6" stroke-width="0.8" opacity="0.42" /><polygon points="810.0,527.2 1042.0,414.2 1048.0,418.4 816.0,531.4" fill="#9dc0e2" stroke="#4d8ad6" stroke-width="0.7" opacity="0.5" /><ellipse cx="826.0" cy="533.2" rx="6.7" ry="8.6" fill="#7595c2" stroke="#4a7fd0" stroke-width="0.9" opacity="0.75" transform="rotate(28 826.0 533.2)"/><ellipse cx="844.5" cy="524.2" rx="6.7" ry="8.6" fill="#7595c2" stroke="#4a7fd0" stroke-width="0.9" opacity="0.75" transform="rotate(28 844.5 524.2)"/><ellipse cx="863.0" cy="515.2" rx="6.7" ry="8.6" fill="#7595c2" stroke="#4a7fd0" stroke-width="0.9" opacity="0.75" transform="rotate(28 863.0 515.2)"/><ellipse cx="881.5" cy="506.2" rx="6.7" ry="8.6" fill="#7595c2" stroke="#4a7fd0" stroke-width="0.9" opacity="0.75" transform="rotate(28 881.5 506.2)"/><ellipse cx="900.0" cy="497.2" rx="6.7" ry="8.6" fill="#7595c2" stroke="#4a7fd0" stroke-width="0.9" opacity="0.75" transform="rotate(28 900.0 497.2)"/><ellipse cx="918.5" cy="488.2" rx="6.7" ry="8.6" fill="#7595c2" stroke="#4a7fd0" stroke-width="0.9" opacity="0.75" transform="rotate(28 918.5 488.2)"/><ellipse cx="937.0" cy="479.1" rx="6.7" ry="8.6" fill="#7595c2" stroke="#4a7fd0" stroke-width="0.9" opacity="0.75" transform="rotate(28 937.0 479.1)"/><ellipse cx="955.5" cy="470.1" rx="6.7" ry="8.6" fill="#7595c2" stroke="#4a7fd0" stroke-width="0.9" opacity="0.75" transform="rotate(28 955.5 470.1)"/><ellipse cx="974.0" cy="461.1" rx="6.7" ry="8.6" fill="#7595c2" stroke="#4a7fd0" stroke-width="0.9" opacity="0.75" transform="rotate(28 974.0 461.1)"/><ellipse cx="992.5" cy="452.1" rx="6.7" ry="8.6" fill="#7595c2" stroke="#4a7fd0" stroke-width="0.9" opacity="0.75" transform="rotate(28 992.5 452.1)"/><ellipse cx="1011.0" cy="443.1" rx="6.7" ry="8.6" fill="#7595c2" stroke="#4a7fd0" stroke-width="0.9" opacity="0.75" transform="rotate(28 1011.0 443.1)"/><ellipse cx="1029.5" cy="434.1" rx="6.7" ry="8.6" fill="#7595c2" stroke="#4a7fd0" stroke-width="0.9" opacity="0.75" transform="rotate(28 1029.5 434.1)"/><ellipse cx="837.3" cy="542.0" rx="6.7" ry="8.6" fill="#7595c2" stroke="#4a7fd0" stroke-width="0.9" opacity="0.75" transform="rotate(28 837.3 542.0)"/><ellipse cx="855.8" cy="533.0" rx="6.7" ry="8.6" fill="#7595c2" stroke="#4a7fd0" stroke-width="0.9" opacity="0.75" transform="rotate(28 855.8 533.0)"/><ellipse cx="874.3" cy="524.0" rx="6.7" ry="8.6" fill="#7595c2" stroke="#4a7fd0" stroke-width="0.9" opacity="0.75" transform="rotate(28 874.3 524.0)"/><ellipse cx="892.8" cy="515.0" rx="6.7" ry="8.6" fill="#7595c2" stroke="#4a7fd0" stroke-width="0.9" opacity="0.75" transform="rotate(28 892.8 515.0)"/><ellipse cx="911.3" cy="506.0" rx="6.7" ry="8.6" fill="#7595c2" stroke="#4a7fd0" stroke-width="0.9" opacity="0.75" transform="rotate(28 911.3 506.0)"/><ellipse cx="929.8" cy="496.9" rx="6.7" ry="8.6" fill="#7595c2" stroke="#4a7fd0" stroke-width="0.9" opacity="0.75" transform="rotate(28 929.8 496.9)"/><ellipse cx="948.3" cy="487.9" rx="6.7" ry="8.6" fill="#7595c2" stroke="#4a7fd0" stroke-width="0.9" opacity="0.75" transform="rotate(28 948.3 487.9)"/><ellipse cx="966.8" cy="478.9" rx="6.7" ry="8.6" fill="#7595c2" stroke="#4a7fd0" stroke-width="0.9" opacity="0.75" transform="rotate(28 966.8 478.9)"/><ellipse cx="985.3" cy="469.9" rx="6.7" ry="8.6" fill="#7595c2" stroke="#4a7fd0" stroke-width="0.9" opacity="0.75" transform="rotate(28 985.3 469.9)"/><ellipse cx="1003.8" cy="460.9" rx="6.7" ry="8.6" fill="#7595c2" stroke="#4a7fd0" stroke-width="0.9" opacity="0.75" transform="rotate(28 1003.8 460.9)"/><ellipse cx="1022.3" cy="451.9" rx="6.7" ry="8.6" fill="#7595c2" stroke="#4a7fd0" stroke-width="0.9" opacity="0.75" transform="rotate(28 1022.3 451.9)"/><polygon points="848.7,580.2 896.7,556.8 928.7,579.2 880.7,602.6" fill="#8ea6b4" stroke="none" stroke-width="1" opacity="0.68" /><polygon points="848.7,580.2 880.7,602.6 880.7,631.6 848.7,609.2" fill="#879da8" stroke="none" stroke-width="1" opacity="0.68" /><polygon points="880.7,602.6 928.7,579.2 928.7,608.2 880.7,631.6" fill="#8399a4" stroke="none" stroke-width="1" opacity="0.68" /><g fill="none" stroke="#4d8ad6" stroke-width="0.8" opacity="0.9" stroke-linejoin="round"><polygon points="848.7,580.2 896.7,556.8 928.7,579.2 928.7,608.2 880.7,631.6 848.7,609.2"/><polyline points="848.7,580.2 880.7,602.6 928.7,579.2"/><line x1="880.7" y1="602.6" x2="880.7" y2="631.6"/></g><polygon points="848.7,548.2 896.7,524.8 928.7,547.2 880.7,570.6" fill="#8ea6b4" stroke="none" stroke-width="1" opacity="0.8" /><polygon points="848.7,548.2 880.7,570.6 880.7,599.6 848.7,577.2" fill="#879da8" stroke="none" stroke-width="1" opacity="0.8" /><polygon points="880.7,570.6 928.7,547.2 928.7,576.2 880.7,599.6" fill="#8399a4" stroke="none" stroke-width="1" opacity="0.8" /><g fill="none" stroke="#4d8ad6" stroke-width="0.8" opacity="0.9" stroke-linejoin="round"><polygon points="848.7,548.2 896.7,524.8 928.7,547.2 928.7,576.2 880.7,599.6 848.7,577.2"/><polyline points="848.7,548.2 880.7,570.6 928.7,547.2"/><line x1="880.7" y1="570.6" x2="880.7" y2="599.6"/></g><polygon points="956.7,527.4 1004.7,504.0 1036.7,526.4 988.7,549.8" fill="#8ea6b4" stroke="none" stroke-width="1" opacity="0.68" /><polygon points="956.7,527.4 988.7,549.8 988.7,578.8 956.7,556.4" fill="#879da8" stroke="none" stroke-width="1" opacity="0.68" /><polygon points="988.7,549.8 1036.7,526.4 1036.7,555.4 988.7,578.8" fill="#8399a4" stroke="none" stroke-width="1" opacity="0.68" /><g fill="none" stroke="#4d8ad6" stroke-width="0.8" opacity="0.9" stroke-linejoin="round"><polygon points="956.7,527.4 1004.7,504.0 1036.7,526.4 1036.7,555.4 988.7,578.8 956.7,556.4"/><polyline points="956.7,527.4 988.7,549.8 1036.7,526.4"/><line x1="988.7" y1="549.8" x2="988.7" y2="578.8"/></g><polygon points="956.7,495.4 1004.7,472.0 1036.7,494.4 988.7,517.8" fill="#8ea6b4" stroke="none" stroke-width="1" opacity="0.8" /><polygon points="956.7,495.4 988.7,517.8 988.7,546.8 956.7,524.4" fill="#879da8" stroke="none" stroke-width="1" opacity="0.8" /><polygon points="988.7,517.8 1036.7,494.4 1036.7,523.4 988.7,546.8" fill="#8399a4" stroke="none" stroke-width="1" opacity="0.8" /><g fill="none" stroke="#4d8ad6" stroke-width="0.8" opacity="0.9" stroke-linejoin="round"><polygon points="956.7,495.4 1004.7,472.0 1036.7,494.4 1036.7,523.4 988.7,546.8 956.7,524.4"/><polyline points="956.7,495.4 988.7,517.8 1036.7,494.4"/><line x1="988.7" y1="517.8" x2="988.7" y2="546.8"/></g><polygon points="929.0,504.0 954.0,521.5 954.0,589.5 929.0,572.0" fill="#bcd5ec" stroke="#8db6e4" stroke-width="0.6" opacity="0.72" /><polygon points="929.0,504.0 934.0,501.6 959.0,519.1 954.0,521.5" fill="#d2e3f3" stroke="none" stroke-width="1" opacity="0.72" /><polygon points="954.0,521.5 959.0,519.1 959.0,587.1 954.0,589.5" fill="#a9c8e6" stroke="none" stroke-width="1" opacity="0.72" /><polygon points="873.8,508.7 886.8,502.4 899.8,511.5 886.8,517.8" fill="#dcc856" stroke="none" stroke-width="1" opacity="0.88" /><polygon points="873.8,508.7 886.8,517.8 886.8,530.4 873.8,521.3" fill="#cdbb55" stroke="none" stroke-width="1" opacity="0.88" /><polygon points="886.8,517.8 899.8,511.5 899.8,524.1 886.8,530.4" fill="#c9b54a" stroke="none" stroke-width="1" opacity="0.88" /><g fill="none" stroke="#5b8fd6" stroke-width="0.8" opacity="0.9" stroke-linejoin="round"><polygon points="873.8,508.7 886.8,502.4 899.8,511.5 899.8,524.1 886.8,530.4 873.8,521.3"/><polyline points="873.8,508.7 886.8,517.8 899.8,511.5"/><line x1="886.8" y1="517.8" x2="886.8" y2="530.4"/></g><polygon points="897.7,497.3 915.7,488.5 933.7,501.1 915.7,509.9" fill="#dcc856" stroke="none" stroke-width="1" opacity="0.88" /><polygon points="897.7,497.3 915.7,509.9 915.7,527.5 897.7,514.9" fill="#cdbb55" stroke="none" stroke-width="1" opacity="0.88" /><polygon points="915.7,509.9 933.7,501.1 933.7,518.7 915.7,527.5" fill="#c9b54a" stroke="none" stroke-width="1" opacity="0.88" /><g fill="none" stroke="#5b8fd6" stroke-width="0.8" opacity="0.9" stroke-linejoin="round"><polygon points="897.7,497.3 915.7,488.5 933.7,501.1 933.7,518.7 915.7,527.5 897.7,514.9"/><polyline points="897.7,497.3 915.7,509.9 933.7,501.1"/><line x1="915.7" y1="509.9" x2="915.7" y2="527.5"/></g><polygon points="980.2,463.3 993.2,457.0 1006.2,466.1 993.2,472.4" fill="#dcc856" stroke="none" stroke-width="1" opacity="0.88" /><polygon points="980.2,463.3 993.2,472.4 993.2,485.0 980.2,475.9" fill="#cdbb55" stroke="none" stroke-width="1" opacity="0.88" /><polygon points="993.2,472.4 1006.2,466.1 1006.2,478.7 993.2,485.0" fill="#c9b54a" stroke="none" stroke-width="1" opacity="0.88" /><g fill="none" stroke="#5b8fd6" stroke-width="0.8" opacity="0.9" stroke-linejoin="round"><polygon points="980.2,463.3 993.2,457.0 1006.2,466.1 1006.2,478.7 993.2,485.0 980.2,475.9"/><polyline points="980.2,463.3 993.2,472.4 1006.2,466.1"/><line x1="993.2" y1="472.4" x2="993.2" y2="485.0"/></g><polygon points="1003.0,447.8 1021.0,439.0 1039.0,451.6 1021.0,460.4" fill="#dcc856" stroke="none" stroke-width="1" opacity="0.88" /><polygon points="1003.0,447.8 1021.0,460.4 1021.0,478.0 1003.0,465.4" fill="#cdbb55" stroke="none" stroke-width="1" opacity="0.88" /><polygon points="1021.0,460.4 1039.0,451.6 1039.0,469.2 1021.0,478.0" fill="#c9b54a" stroke="none" stroke-width="1" opacity="0.88" /><g fill="none" stroke="#5b8fd6" stroke-width="0.8" opacity="0.9" stroke-linejoin="round"><polygon points="1003.0,447.8 1021.0,439.0 1039.0,451.6 1039.0,469.2 1021.0,478.0 1003.0,465.4"/><polyline points="1003.0,447.8 1021.0,460.4 1039.0,451.6"/><line x1="1021.0" y1="460.4" x2="1021.0" y2="478.0"/></g><g clip-path="url(#wpclip)"><polygon points="1003.0,447.8 1021.0,439.0 1039.0,451.6 1021.0,460.4" fill="#66c2b4" stroke="none" stroke-width="1" opacity="1" /><polygon points="1003.0,447.8 1021.0,460.4 1021.0,478.0 1003.0,465.4" fill="#62bba9" stroke="none" stroke-width="1" opacity="1" /><polygon points="1021.0,460.4 1039.0,451.6 1039.0,469.2 1021.0,478.0" fill="#5fb6a4" stroke="none" stroke-width="1" opacity="1" /><g fill="none" stroke="#5b8fd6" stroke-width="0.8" opacity="1" stroke-linejoin="round"><polygon points="1003.0,447.8 1021.0,439.0 1039.0,451.6 1039.0,469.2 1021.0,478.0 1003.0,465.4"/><polyline points="1003.0,447.8 1021.0,460.4 1039.0,451.6"/><line x1="1021.0" y1="460.4" x2="1021.0" y2="478.0"/></g></g><polygon points="868.0,567.8 1100.0,454.8 1100.0,550.8 868.0,663.8" fill="#7c9cc4" stroke="#4d8ad6" stroke-width="0.8" opacity="0.42" /><polygon points="868.0,567.8 1100.0,454.8 1106.0,459.0 874.0,572.0" fill="#9dc0e2" stroke="#4d8ad6" stroke-width="0.7" opacity="0.5" /><ellipse cx="884.0" cy="573.8" rx="6.7" ry="8.6" fill="#7595c2" stroke="#4a7fd0" stroke-width="0.9" opacity="0.75" transform="rotate(28 884.0 573.8)"/><ellipse cx="902.5" cy="564.8" rx="6.7" ry="8.6" fill="#7595c2" stroke="#4a7fd0" stroke-width="0.9" opacity="0.75" transform="rotate(28 902.5 564.8)"/><ellipse cx="921.0" cy="555.8" rx="6.7" ry="8.6" fill="#7595c2" stroke="#4a7fd0" stroke-width="0.9" opacity="0.75" transform="rotate(28 921.0 555.8)"/><ellipse cx="939.5" cy="546.8" rx="6.7" ry="8.6" fill="#7595c2" stroke="#4a7fd0" stroke-width="0.9" opacity="0.75" transform="rotate(28 939.5 546.8)"/><ellipse cx="958.0" cy="537.8" rx="6.7" ry="8.6" fill="#7595c2" stroke="#4a7fd0" stroke-width="0.9" opacity="0.75" transform="rotate(28 958.0 537.8)"/><ellipse cx="976.5" cy="528.8" rx="6.7" ry="8.6" fill="#7595c2" stroke="#4a7fd0" stroke-width="0.9" opacity="0.75" transform="rotate(28 976.5 528.8)"/><ellipse cx="995.0" cy="519.7" rx="6.7" ry="8.6" fill="#7595c2" stroke="#4a7fd0" stroke-width="0.9" opacity="0.75" transform="rotate(28 995.0 519.7)"/><ellipse cx="1013.5" cy="510.7" rx="6.7" ry="8.6" fill="#7595c2" stroke="#4a7fd0" stroke-width="0.9" opacity="0.75" transform="rotate(28 1013.5 510.7)"/><ellipse cx="1032.0" cy="501.7" rx="6.7" ry="8.6" fill="#7595c2" stroke="#4a7fd0" stroke-width="0.9" opacity="0.75" transform="rotate(28 1032.0 501.7)"/><ellipse cx="1050.5" cy="492.7" rx="6.7" ry="8.6" fill="#7595c2" stroke="#4a7fd0" stroke-width="0.9" opacity="0.75" transform="rotate(28 1050.5 492.7)"/><ellipse cx="1069.0" cy="483.7" rx="6.7" ry="8.6" fill="#7595c2" stroke="#4a7fd0" stroke-width="0.9" opacity="0.75" transform="rotate(28 1069.0 483.7)"/><ellipse cx="895.3" cy="582.6" rx="6.7" ry="8.6" fill="#7595c2" stroke="#4a7fd0" stroke-width="0.9" opacity="0.75" transform="rotate(28 895.3 582.6)"/><ellipse cx="913.8" cy="573.6" rx="6.7" ry="8.6" fill="#7595c2" stroke="#4a7fd0" stroke-width="0.9" opacity="0.75" transform="rotate(28 913.8 573.6)"/><ellipse cx="932.3" cy="564.6" rx="6.7" ry="8.6" fill="#7595c2" stroke="#4a7fd0" stroke-width="0.9" opacity="0.75" transform="rotate(28 932.3 564.6)"/><ellipse cx="950.8" cy="555.6" rx="6.7" ry="8.6" fill="#7595c2" stroke="#4a7fd0" stroke-width="0.9" opacity="0.75" transform="rotate(28 950.8 555.6)"/><ellipse cx="969.3" cy="546.6" rx="6.7" ry="8.6" fill="#7595c2" stroke="#4a7fd0" stroke-width="0.9" opacity="0.75" transform="rotate(28 969.3 546.6)"/><ellipse cx="987.8" cy="537.5" rx="6.7" ry="8.6" fill="#7595c2" stroke="#4a7fd0" stroke-width="0.9" opacity="0.75" transform="rotate(28 987.8 537.5)"/><ellipse cx="1006.3" cy="528.5" rx="6.7" ry="8.6" fill="#7595c2" stroke="#4a7fd0" stroke-width="0.9" opacity="0.75" transform="rotate(28 1006.3 528.5)"/><ellipse cx="1024.8" cy="519.5" rx="6.7" ry="8.6" fill="#7595c2" stroke="#4a7fd0" stroke-width="0.9" opacity="0.75" transform="rotate(28 1024.8 519.5)"/><ellipse cx="1043.3" cy="510.5" rx="6.7" ry="8.6" fill="#7595c2" stroke="#4a7fd0" stroke-width="0.9" opacity="0.75" transform="rotate(28 1043.3 510.5)"/><ellipse cx="1061.8" cy="501.5" rx="6.7" ry="8.6" fill="#7595c2" stroke="#4a7fd0" stroke-width="0.9" opacity="0.75" transform="rotate(28 1061.8 501.5)"/><polygon points="906.4,622.4 954.4,599.0 986.4,621.4 938.4,644.8" fill="#8ea6b4" stroke="none" stroke-width="1" opacity="0.272" /><polygon points="906.4,622.4 938.4,644.8 938.4,673.8 906.4,651.4" fill="#879da8" stroke="none" stroke-width="1" opacity="0.272" /><polygon points="938.4,644.8 986.4,621.4 986.4,650.4 938.4,673.8" fill="#8399a4" stroke="none" stroke-width="1" opacity="0.272" /><g fill="none" stroke="#4d8ad6" stroke-width="0.8" opacity="0.9" stroke-linejoin="round"><polygon points="906.4,622.4 954.4,599.0 986.4,621.4 986.4,650.4 938.4,673.8 906.4,651.4"/><polyline points="906.4,622.4 938.4,644.8 986.4,621.4"/><line x1="938.4" y1="644.8" x2="938.4" y2="673.8"/></g><polygon points="906.4,590.4 954.4,567.0 986.4,589.4 938.4,612.8" fill="#8ea6b4" stroke="none" stroke-width="1" opacity="0.32" /><polygon points="906.4,590.4 938.4,612.8 938.4,641.8 906.4,619.4" fill="#879da8" stroke="none" stroke-width="1" opacity="0.32" /><polygon points="938.4,612.8 986.4,589.4 986.4,618.4 938.4,641.8" fill="#8399a4" stroke="none" stroke-width="1" opacity="0.32" /><g fill="none" stroke="#4d8ad6" stroke-width="0.8" opacity="0.9" stroke-linejoin="round"><polygon points="906.4,590.4 954.4,567.0 986.4,589.4 986.4,618.4 938.4,641.8 906.4,619.4"/><polyline points="906.4,590.4 938.4,612.8 986.4,589.4"/><line x1="938.4" y1="612.8" x2="938.4" y2="641.8"/></g><polygon points="1014.4,569.6 1062.4,546.2 1094.4,568.6 1046.4,592.0" fill="#8ea6b4" stroke="none" stroke-width="1" opacity="0.272" /><polygon points="1014.4,569.6 1046.4,592.0 1046.4,621.0 1014.4,598.6" fill="#879da8" stroke="none" stroke-width="1" opacity="0.272" /><polygon points="1046.4,592.0 1094.4,568.6 1094.4,597.6 1046.4,621.0" fill="#8399a4" stroke="none" stroke-width="1" opacity="0.272" /><g fill="none" stroke="#4d8ad6" stroke-width="0.8" opacity="0.9" stroke-linejoin="round"><polygon points="1014.4,569.6 1062.4,546.2 1094.4,568.6 1094.4,597.6 1046.4,621.0 1014.4,598.6"/><polyline points="1014.4,569.6 1046.4,592.0 1094.4,568.6"/><line x1="1046.4" y1="592.0" x2="1046.4" y2="621.0"/></g><polygon points="1014.4,537.6 1062.4,514.2 1094.4,536.6 1046.4,560.0" fill="#8ea6b4" stroke="none" stroke-width="1" opacity="0.32" /><polygon points="1014.4,537.6 1046.4,560.0 1046.4,589.0 1014.4,566.6" fill="#879da8" stroke="none" stroke-width="1" opacity="0.32" /><polygon points="1046.4,560.0 1094.4,536.6 1094.4,565.6 1046.4,589.0" fill="#8399a4" stroke="none" stroke-width="1" opacity="0.32" /><g fill="none" stroke="#4d8ad6" stroke-width="0.8" opacity="0.9" stroke-linejoin="round"><polygon points="1014.4,537.6 1062.4,514.2 1094.4,536.6 1094.4,565.6 1046.4,589.0 1014.4,566.6"/><polyline points="1014.4,537.6 1046.4,560.0 1094.4,536.6"/><line x1="1046.4" y1="560.0" x2="1046.4" y2="589.0"/></g><polygon points="986.7,546.2 1011.7,563.7 1011.7,633.7 986.7,616.2" fill="#bcd5ec" stroke="#8db6e4" stroke-width="0.6" opacity="0.72" /><polygon points="986.7,546.2 991.7,543.8 1016.7,561.3 1011.7,563.7" fill="#d2e3f3" stroke="none" stroke-width="1" opacity="0.72" /><polygon points="1011.7,563.7 1016.7,561.3 1016.7,631.3 1011.7,633.7" fill="#a9c8e6" stroke="none" stroke-width="1" opacity="0.72" /><polygon points="931.5,550.9 944.5,544.6 957.5,553.7 944.5,560.0" fill="#dcc856" stroke="none" stroke-width="1" opacity="0.88" /><polygon points="931.5,550.9 944.5,560.0 944.5,572.6 931.5,563.5" fill="#cdbb55" stroke="none" stroke-width="1" opacity="0.88" /><polygon points="944.5,560.0 957.5,553.7 957.5,566.3 944.5,572.6" fill="#c9b54a" stroke="none" stroke-width="1" opacity="0.88" /><g fill="none" stroke="#5b8fd6" stroke-width="0.8" opacity="0.9" stroke-linejoin="round"><polygon points="931.5,550.9 944.5,544.6 957.5,553.7 957.5,566.3 944.5,572.6 931.5,563.5"/><polyline points="931.5,550.9 944.5,560.0 957.5,553.7"/><line x1="944.5" y1="560.0" x2="944.5" y2="572.6"/></g><polygon points="955.8,539.3 973.8,530.5 991.8,543.1 973.8,551.9" fill="#dcc856" stroke="none" stroke-width="1" opacity="0.88" /><polygon points="955.8,539.3 973.8,551.9 973.8,569.5 955.8,556.9" fill="#cdbb55" stroke="none" stroke-width="1" opacity="0.88" /><polygon points="973.8,551.9 991.8,543.1 991.8,560.7 973.8,569.5" fill="#c9b54a" stroke="none" stroke-width="1" opacity="0.88" /><g fill="none" stroke="#5b8fd6" stroke-width="0.8" opacity="0.9" stroke-linejoin="round"><polygon points="955.8,539.3 973.8,530.5 991.8,543.1 991.8,560.7 973.8,569.5 955.8,556.9"/><polyline points="955.8,539.3 973.8,551.9 991.8,543.1"/><line x1="973.8" y1="551.9" x2="973.8" y2="569.5"/></g><polygon points="1038.6,507.1 1051.6,500.8 1064.6,509.9 1051.6,516.2" fill="#dcc856" stroke="none" stroke-width="1" opacity="0.88" /><polygon points="1038.6,507.1 1051.6,516.2 1051.6,528.8 1038.6,519.7" fill="#cdbb55" stroke="none" stroke-width="1" opacity="0.88" /><polygon points="1051.6,516.2 1064.6,509.9 1064.6,522.5 1051.6,528.8" fill="#c9b54a" stroke="none" stroke-width="1" opacity="0.88" /><g fill="none" stroke="#5b8fd6" stroke-width="0.8" opacity="0.9" stroke-linejoin="round"><polygon points="1038.6,507.1 1051.6,500.8 1064.6,509.9 1064.6,522.5 1051.6,528.8 1038.6,519.7"/><polyline points="1038.6,507.1 1051.6,516.2 1064.6,509.9"/><line x1="1051.6" y1="516.2" x2="1051.6" y2="528.8"/></g><polygon points="1063.0,488.5 1081.0,479.7 1099.0,492.3 1081.0,501.1" fill="#dcc856" stroke="none" stroke-width="1" opacity="0.88" /><polygon points="1063.0,488.5 1081.0,501.1 1081.0,518.7 1063.0,506.1" fill="#cdbb55" stroke="none" stroke-width="1" opacity="0.88" /><polygon points="1081.0,501.1 1099.0,492.3 1099.0,509.9 1081.0,518.7" fill="#c9b54a" stroke="none" stroke-width="1" opacity="0.88" /><g fill="none" stroke="#5b8fd6" stroke-width="0.8" opacity="0.9" stroke-linejoin="round"><polygon points="1063.0,488.5 1081.0,479.7 1099.0,492.3 1099.0,509.9 1081.0,518.7 1063.0,506.1"/><polyline points="1063.0,488.5 1081.0,501.1 1099.0,492.3"/><line x1="1081.0" y1="501.1" x2="1081.0" y2="518.7"/></g><g clip-path="url(#wpclip)"><polygon points="1063.0,488.5 1081.0,479.7 1099.0,492.3 1081.0,501.1" fill="#66c2b4" stroke="none" stroke-width="1" opacity="1" /><polygon points="1063.0,488.5 1081.0,501.1 1081.0,518.7 1063.0,506.1" fill="#62bba9" stroke="none" stroke-width="1" opacity="1" /><polygon points="1081.0,501.1 1099.0,492.3 1099.0,509.9 1081.0,518.7" fill="#5fb6a4" stroke="none" stroke-width="1" opacity="1" /><g fill="none" stroke="#5b8fd6" stroke-width="0.8" opacity="1" stroke-linejoin="round"><polygon points="1063.0,488.5 1081.0,479.7 1099.0,492.3 1099.0,509.9 1081.0,518.7 1063.0,506.1"/><polyline points="1063.0,488.5 1081.0,501.1 1099.0,492.3"/><line x1="1081.0" y1="501.1" x2="1081.0" y2="518.7"/></g></g><polygon points="880.7,601.0 904.7,617.8 904.7,685.8 880.7,669.0" fill="#bcd5ec" stroke="#8db6e4" stroke-width="0.6" opacity="0.72" /><polygon points="880.7,601.0 885.7,598.6 909.7,615.4 904.7,617.8" fill="#d2e3f3" stroke="none" stroke-width="1" opacity="0.72" /><polygon points="904.7,617.8 909.7,615.4 909.7,683.4 904.7,685.8" fill="#a9c8e6" stroke="none" stroke-width="1" opacity="0.72" /><polygon points="978.6,445.6 1097.0,388.8 1186.4,452.0 1069.5,513.8" fill="#7fb6ea" stroke="none" stroke-width="1" opacity="0.55" /><g opacity="0.75"><path d="M1120.3 510.5 V558.5 A5.2 3 0 0 0 1130.7 558.5 V510.5 Z" fill="#8ab3dc" stroke="none" stroke-width="1" /><ellipse cx="1125.5" cy="558.5" rx="5.2" ry="3" fill="none" stroke="#5e8fc8" stroke-width="0.6400000000000001" opacity="0.6"/><ellipse cx="1125.5" cy="510.5" rx="5.2" ry="3" fill="#8fb6dd" stroke="#5e8fc8" stroke-width="0.8"/></g><ellipse cx="1125.5" cy="510.5" rx="5.2" ry="3" fill="none" stroke="#27457f" stroke-width="1.0" opacity="0.9"/><g opacity="0.75"><path d="M1138.8 500 V548 A5.2 3 0 0 0 1149.2 548 V500 Z" fill="#8ab3dc" stroke="none" stroke-width="1" /><ellipse cx="1144" cy="548" rx="5.2" ry="3" fill="none" stroke="#5e8fc8" stroke-width="0.6400000000000001" opacity="0.6"/><ellipse cx="1144" cy="500" rx="5.2" ry="3" fill="#8fb6dd" stroke="#5e8fc8" stroke-width="0.8"/></g><ellipse cx="1144" cy="500" rx="5.2" ry="3" fill="none" stroke="#27457f" stroke-width="1.0" opacity="0.9"/><ellipse cx="1140.5" cy="571.5" rx="5.5" ry="3.1" fill="#7db2e8" stroke="#3f66a8" stroke-width="0.9" opacity="0.85"/><ellipse cx="1160" cy="562.5" rx="5.5" ry="3.1" fill="#7db2e8" stroke="#3f66a8" stroke-width="0.9" opacity="0.85"/><ellipse cx="1143" cy="521.5" rx="5.5" ry="3.1" fill="#7db2e8" stroke="#3f66a8" stroke-width="0.9" opacity="0.85"/><ellipse cx="1160.5" cy="512" rx="5.5" ry="3.1" fill="#7db2e8" stroke="#3f66a8" stroke-width="0.9" opacity="0.85"/><polygon points="1169.3,469.4 1208.0,494.6 1208.0,519.7 1184.5,531.2 1169.3,521.0" fill="#74aeea" stroke="none" stroke-width="1" opacity="0.4" /><path d="M1169.3 469.4 V493 M1208 494.6 V519.7 L1184.5 531.2 V507 M1176 506 V525 L1184.5 531.2 M1177.6 482 L1199 497.7 V512 M1177.6 482 V497.7 M1184.5 507 L1208 494.6" fill="none" stroke="#3f72c0" stroke-width="0.9" opacity="0.75" /><path d="M1171.9 468.9 L1208 494.6 M1154 493 L1175 507" fill="none" stroke="#1f3c74" stroke-width="1.0" opacity="0.85" /><path d="M1154 493 V509.2 M1155 497.7 Q1160 506 1172 507.6" fill="none" stroke="#2f5aa8" stroke-width="0.9" opacity="0.8" /><polygon points="748.1,559.5 747.5,567.8 745.7,575.0 742.8,580.8 738.9,585.2 734.0,588.0 728.4,589.0 722.1,588.3 715.5,585.9 708.6,581.9 701.7,576.3 695.1,569.4 688.9,561.4 683.2,552.4 678.3,542.9 674.4,533.0 671.5,523.0 669.7,513.4 669.1,504.2 669.7,496.0 671.5,488.8 674.4,483.0 678.3,478.6 683.2,475.8 688.9,474.8 695.1,475.5 701.7,477.9 708.6,481.9 715.5,487.5 722.1,494.4 728.4,502.4 734.0,511.4 738.9,520.9 742.8,530.8 745.7,540.8 747.5,550.4 748.1,559.5" fill="#7db4ec" stroke="#2d5ea8" stroke-width="0.8" opacity="0.25" /><polygon points="741.5,559.5 740.9,567.8 739.1,575.0 736.2,580.8 732.3,585.2 727.4,588.0 721.8,589.0 715.5,588.3 708.9,585.9 702.0,581.9 695.1,576.3 688.5,569.4 682.2,561.4 676.6,552.4 671.7,542.9 667.8,533.0 664.9,523.0 663.1,513.4 662.5,504.2 663.1,496.0 664.9,488.8 667.8,483.0 671.7,478.6 676.6,475.8 682.2,474.8 688.5,475.5 695.1,477.9 702.0,481.9 708.9,487.5 715.5,494.4 721.8,502.4 727.4,511.4 732.3,520.9 736.2,530.8 739.1,540.8 740.9,550.4 741.5,559.5" fill="#86b9ec" stroke="none" stroke-width="1" opacity="0.12" /><polygon points="719.4,544.1 719.1,547.7 718.3,550.9 717.1,553.4 715.3,555.4 713.2,556.6 710.7,557.0 707.9,556.7 705.0,555.7 702.0,553.9 699.0,551.5 696.1,548.4 693.3,544.9 690.8,540.9 688.7,536.7 686.9,532.4 685.7,528.0 684.9,523.7 684.6,519.7 684.9,516.1 685.7,512.9 686.9,510.4 688.7,508.4 690.8,507.2 693.3,506.8 696.1,507.1 699.0,508.1 702.0,509.9 705.0,512.3 707.9,515.4 710.7,518.9 713.2,522.9 715.3,527.1 717.1,531.4 718.3,535.8 719.1,540.1 719.4,544.1" fill="#6aa8e6" stroke="none" stroke-width="1" opacity="0.5" /><polygon points="710.2,483.1 712.5,484.8 714.7,486.8 716.9,488.8 719.1,491.0 721.2,493.4 723.3,495.8 725.4,498.4 727.4,501.1 729.4,503.9 731.2,506.8 733.0,509.7 734.8,512.8 736.4,515.9 738.0,519.0 739.4,522.2 740.8,525.4 742.0,528.7 743.2,531.9 744.2,535.2 745.1,538.4 745.9,541.6 746.6,544.8 747.1,548.0 747.6,551.1 747.9,554.1 748.1,557.0 748.1,559.9 748.0,562.7 747.8,565.4 747.5,568.0 747.0,570.4 746.4,572.8 745.7,575.0 744.9,577.1 743.9,579.0 742.9,580.7 723.7,553.4 724.1,552.6 724.6,551.8 724.9,550.9 725.2,549.9 725.5,548.9 725.7,547.8 725.9,546.6 725.9,545.5 726.0,544.2 726.0,543.0 725.9,541.7 725.7,540.3 725.6,539.0 725.3,537.6 725.0,536.2 724.7,534.8 724.3,533.3 723.8,531.9 723.3,530.5 722.8,529.0 722.2,527.6 721.5,526.2 720.8,524.8 720.1,523.5 719.4,522.1 718.6,520.8 717.7,519.6 716.9,518.3 716.0,517.2 715.1,516.0 714.2,514.9 713.2,513.9 712.3,512.9 711.3,512.0 710.3,511.2 709.3,510.4" fill="none" stroke="#1f3f78" stroke-width="0.8" opacity="0.7" /><polygon points="740.3,583.9 739.0,585.1 737.6,586.2 736.1,587.1 734.5,587.8 732.9,588.3 731.1,588.7 729.4,589.0 727.5,589.0 725.6,588.9 723.7,588.7 721.7,588.2 719.7,587.6 717.6,586.9 715.5,586.0 713.4,584.9 711.3,583.7 709.2,582.3 707.1,580.8 704.9,579.1 702.8,577.3 700.7,575.4 698.6,573.3 696.6,571.1 694.6,568.8 692.6,566.4 690.7,563.9 688.8,561.3 687.0,558.7 685.3,555.9 683.6,553.1 682.0,550.2 680.4,547.3 679.0,544.3 677.6,541.2 676.3,538.2 675.2,535.1 693.9,533.3 694.4,534.7 695.0,536.0 695.6,537.3 696.2,538.7 696.9,539.9 697.6,541.2 698.3,542.5 699.1,543.7 699.9,544.9 700.7,546.0 701.6,547.1 702.4,548.2 703.3,549.2 704.2,550.1 705.1,551.0 706.1,551.9 707.0,552.7 707.9,553.4 708.9,554.1 709.8,554.7 710.7,555.2 711.6,555.7 712.6,556.1 713.5,556.4 714.4,556.7 715.2,556.9 716.1,557.0 716.9,557.0 717.7,557.0 718.5,556.9 719.3,556.7 720.0,556.5 720.7,556.2 721.3,555.8 722.0,555.3 722.5,554.8" fill="none" stroke="#1f3f78" stroke-width="0.8" opacity="0.7" /><polygon points="673.2,529.4 672.3,526.3 671.5,523.1 670.8,520.0 670.2,516.9 669.8,513.9 669.4,510.9 669.2,508.0 669.1,505.2 669.1,502.4 669.3,499.8 669.5,497.2 669.9,494.7 670.4,492.4 671.0,490.2 671.8,488.1 672.6,486.1 673.6,484.3 674.6,482.6 675.8,481.1 677.1,479.7 678.4,478.5 679.9,477.5 681.4,476.6 683.0,475.9 684.8,475.3 686.5,475.0 688.4,474.8 690.3,474.8 692.2,474.9 694.3,475.3 696.3,475.8 698.4,476.5 700.5,477.3 702.7,478.3 704.9,479.5 707.1,480.9 707.9,509.4 707.0,508.8 706.0,508.3 705.1,507.9 704.1,507.5 703.2,507.2 702.3,507.0 701.4,506.8 700.5,506.8 699.7,506.8 698.9,506.9 698.1,507.0 697.4,507.3 696.6,507.6 696.0,508.0 695.3,508.4 694.7,508.9 694.2,509.5 693.6,510.2 693.2,511.0 692.8,511.8 692.4,512.6 692.1,513.5 691.8,514.5 691.6,515.6 691.4,516.6 691.3,517.8 691.2,518.9 691.2,520.1 691.3,521.4 691.4,522.7 691.5,524.0 691.7,525.3 692.0,526.7 692.3,528.0 692.6,529.4 693.0,530.8" fill="none" stroke="#1f3f78" stroke-width="0.8" opacity="0.7" /><polygon points="703.6,483.1 705.9,484.8 708.1,486.8 710.3,488.8 712.5,491.0 714.6,493.4 716.7,495.8 718.8,498.4 720.8,501.1 722.8,503.9 724.6,506.8 726.4,509.7 728.2,512.8 729.8,515.9 731.4,519.0 732.8,522.2 734.2,525.4 735.4,528.7 736.6,531.9 737.6,535.2 738.5,538.4 739.3,541.6 740.0,544.8 740.5,548.0 741.0,551.1 741.3,554.1 741.5,557.0 741.5,559.9 741.4,562.7 741.2,565.4 740.9,568.0 740.4,570.4 739.8,572.8 739.1,575.0 738.3,577.1 737.3,579.0 736.3,580.7 717.1,553.4 717.5,552.6 718.0,551.8 718.3,550.9 718.6,549.9 718.9,548.9 719.1,547.8 719.3,546.6 719.3,545.5 719.4,544.2 719.4,543.0 719.3,541.7 719.1,540.3 719.0,539.0 718.7,537.6 718.4,536.2 718.1,534.8 717.7,533.3 717.2,531.9 716.7,530.5 716.2,529.0 715.6,527.6 714.9,526.2 714.2,524.8 713.5,523.5 712.8,522.1 712.0,520.8 711.1,519.6 710.3,518.3 709.4,517.2 708.5,516.0 707.6,514.9 706.6,513.9 705.7,512.9 704.7,512.0 703.7,511.2 702.7,510.4" fill="#6ea9e6" stroke="none" stroke-width="1" opacity="0.25" /><polygon points="703.6,483.1 705.9,484.8 708.1,486.8 710.3,488.8 712.5,491.0 714.6,493.4 716.7,495.8 718.8,498.4 720.8,501.1 722.8,503.9 724.6,506.8 726.4,509.7 728.2,512.8 729.8,515.9 731.4,519.0 732.8,522.2 734.2,525.4 735.4,528.7 736.6,531.9 737.6,535.2 738.5,538.4 739.3,541.6 740.0,544.8 740.5,548.0 741.0,551.1 741.3,554.1 741.5,557.0 741.5,559.9 741.4,562.7 741.2,565.4 740.9,568.0 740.4,570.4 739.8,572.8 739.1,575.0 738.3,577.1 737.3,579.0 736.3,580.7 717.1,553.4 717.5,552.6 718.0,551.8 718.3,550.9 718.6,549.9 718.9,548.9 719.1,547.8 719.3,546.6 719.3,545.5 719.4,544.2 719.4,543.0 719.3,541.7 719.1,540.3 719.0,539.0 718.7,537.6 718.4,536.2 718.1,534.8 717.7,533.3 717.2,531.9 716.7,530.5 716.2,529.0 715.6,527.6 714.9,526.2 714.2,524.8 713.5,523.5 712.8,522.1 712.0,520.8 711.1,519.6 710.3,518.3 709.4,517.2 708.5,516.0 707.6,514.9 706.6,513.9 705.7,512.9 704.7,512.0 703.7,511.2 702.7,510.4" fill="none" stroke="#121a28" stroke-width="1.35" /><line x1="703.6" y1="483.1" x2="710.2" y2="479.9" stroke="#1a2a48" stroke-width="0.9" opacity="0.8" /><line x1="736.3" y1="580.7" x2="742.9" y2="577.5" stroke="#1a2a48" stroke-width="0.9" opacity="0.8" /><line x1="702.7" y1="510.4" x2="709.3" y2="507.2" stroke="#1a2a48" stroke-width="0.9" opacity="0.8" /><line x1="717.1" y1="553.4" x2="723.7" y2="550.2" stroke="#1a2a48" stroke-width="0.9" opacity="0.8" /><polygon points="733.7,583.9 732.4,585.1 731.0,586.2 729.5,587.1 727.9,587.8 726.3,588.3 724.5,588.7 722.8,589.0 720.9,589.0 719.0,588.9 717.1,588.7 715.1,588.2 713.1,587.6 711.0,586.9 708.9,586.0 706.8,584.9 704.7,583.7 702.6,582.3 700.5,580.8 698.3,579.1 696.2,577.3 694.1,575.4 692.0,573.3 690.0,571.1 688.0,568.8 686.0,566.4 684.1,563.9 682.2,561.3 680.4,558.7 678.7,555.9 677.0,553.1 675.4,550.2 673.8,547.3 672.4,544.3 671.0,541.2 669.7,538.2 668.6,535.1 687.3,533.3 687.8,534.7 688.4,536.0 689.0,537.3 689.6,538.7 690.3,539.9 691.0,541.2 691.7,542.5 692.5,543.7 693.3,544.9 694.1,546.0 695.0,547.1 695.8,548.2 696.7,549.2 697.6,550.1 698.5,551.0 699.5,551.9 700.4,552.7 701.3,553.4 702.3,554.1 703.2,554.7 704.1,555.2 705.0,555.7 706.0,556.1 706.9,556.4 707.8,556.7 708.6,556.9 709.5,557.0 710.3,557.0 711.1,557.0 711.9,556.9 712.7,556.7 713.4,556.5 714.1,556.2 714.7,555.8 715.4,555.3 715.9,554.8" fill="#6ea9e6" stroke="none" stroke-width="1" opacity="0.25" /><polygon points="733.7,583.9 732.4,585.1 731.0,586.2 729.5,587.1 727.9,587.8 726.3,588.3 724.5,588.7 722.8,589.0 720.9,589.0 719.0,588.9 717.1,588.7 715.1,588.2 713.1,587.6 711.0,586.9 708.9,586.0 706.8,584.9 704.7,583.7 702.6,582.3 700.5,580.8 698.3,579.1 696.2,577.3 694.1,575.4 692.0,573.3 690.0,571.1 688.0,568.8 686.0,566.4 684.1,563.9 682.2,561.3 680.4,558.7 678.7,555.9 677.0,553.1 675.4,550.2 673.8,547.3 672.4,544.3 671.0,541.2 669.7,538.2 668.6,535.1 687.3,533.3 687.8,534.7 688.4,536.0 689.0,537.3 689.6,538.7 690.3,539.9 691.0,541.2 691.7,542.5 692.5,543.7 693.3,544.9 694.1,546.0 695.0,547.1 695.8,548.2 696.7,549.2 697.6,550.1 698.5,551.0 699.5,551.9 700.4,552.7 701.3,553.4 702.3,554.1 703.2,554.7 704.1,555.2 705.0,555.7 706.0,556.1 706.9,556.4 707.8,556.7 708.6,556.9 709.5,557.0 710.3,557.0 711.1,557.0 711.9,556.9 712.7,556.7 713.4,556.5 714.1,556.2 714.7,555.8 715.4,555.3 715.9,554.8" fill="none" stroke="#121a28" stroke-width="1.35" /><line x1="733.7" y1="583.9" x2="740.3" y2="580.7" stroke="#1a2a48" stroke-width="0.9" opacity="0.8" /><line x1="668.6" y1="535.1" x2="675.2" y2="531.9" stroke="#1a2a48" stroke-width="0.9" opacity="0.8" /><line x1="715.9" y1="554.8" x2="722.5" y2="551.6" stroke="#1a2a48" stroke-width="0.9" opacity="0.8" /><line x1="687.3" y1="533.3" x2="693.9" y2="530.1" stroke="#1a2a48" stroke-width="0.9" opacity="0.8" /><polygon points="666.6,529.4 665.7,526.3 664.9,523.1 664.2,520.0 663.6,516.9 663.2,513.9 662.8,510.9 662.6,508.0 662.5,505.2 662.5,502.4 662.7,499.8 662.9,497.2 663.3,494.7 663.8,492.4 664.4,490.2 665.2,488.1 666.0,486.1 667.0,484.3 668.0,482.6 669.2,481.1 670.5,479.7 671.8,478.5 673.3,477.5 674.8,476.6 676.4,475.9 678.2,475.3 679.9,475.0 681.8,474.8 683.7,474.8 685.6,474.9 687.7,475.3 689.7,475.8 691.8,476.5 693.9,477.3 696.1,478.3 698.3,479.5 700.5,480.9 701.3,509.4 700.4,508.8 699.4,508.3 698.5,507.9 697.5,507.5 696.6,507.2 695.7,507.0 694.8,506.8 693.9,506.8 693.1,506.8 692.3,506.9 691.5,507.0 690.8,507.3 690.0,507.6 689.4,508.0 688.7,508.4 688.1,508.9 687.6,509.5 687.0,510.2 686.6,511.0 686.2,511.8 685.8,512.6 685.5,513.5 685.2,514.5 685.0,515.6 684.8,516.6 684.7,517.8 684.6,518.9 684.6,520.1 684.7,521.4 684.8,522.7 684.9,524.0 685.1,525.3 685.4,526.7 685.7,528.0 686.0,529.4 686.4,530.8" fill="#6ea9e6" stroke="none" stroke-width="1" opacity="0.25" /><polygon points="666.6,529.4 665.7,526.3 664.9,523.1 664.2,520.0 663.6,516.9 663.2,513.9 662.8,510.9 662.6,508.0 662.5,505.2 662.5,502.4 662.7,499.8 662.9,497.2 663.3,494.7 663.8,492.4 664.4,490.2 665.2,488.1 666.0,486.1 667.0,484.3 668.0,482.6 669.2,481.1 670.5,479.7 671.8,478.5 673.3,477.5 674.8,476.6 676.4,475.9 678.2,475.3 679.9,475.0 681.8,474.8 683.7,474.8 685.6,474.9 687.7,475.3 689.7,475.8 691.8,476.5 693.9,477.3 696.1,478.3 698.3,479.5 700.5,480.9 701.3,509.4 700.4,508.8 699.4,508.3 698.5,507.9 697.5,507.5 696.6,507.2 695.7,507.0 694.8,506.8 693.9,506.8 693.1,506.8 692.3,506.9 691.5,507.0 690.8,507.3 690.0,507.6 689.4,508.0 688.7,508.4 688.1,508.9 687.6,509.5 687.0,510.2 686.6,511.0 686.2,511.8 685.8,512.6 685.5,513.5 685.2,514.5 685.0,515.6 684.8,516.6 684.7,517.8 684.6,518.9 684.6,520.1 684.7,521.4 684.8,522.7 684.9,524.0 685.1,525.3 685.4,526.7 685.7,528.0 686.0,529.4 686.4,530.8" fill="none" stroke="#121a28" stroke-width="1.35" /><line x1="666.6" y1="529.4" x2="673.2" y2="526.2" stroke="#1a2a48" stroke-width="0.9" opacity="0.8" /><line x1="700.5" y1="480.9" x2="707.1" y2="477.7" stroke="#1a2a48" stroke-width="0.9" opacity="0.8" /><line x1="686.4" y1="530.8" x2="693.0" y2="527.6" stroke="#1a2a48" stroke-width="0.9" opacity="0.8" /><line x1="701.3" y1="509.4" x2="707.9" y2="506.2" stroke="#1a2a48" stroke-width="0.9" opacity="0.8" /><polygon points="865.1,643.0 864.5,651.3 862.7,658.5 859.8,664.3 855.9,668.7 851.0,671.5 845.4,672.5 839.1,671.8 832.5,669.4 825.6,665.4 818.7,659.8 812.1,652.9 805.9,644.9 800.2,635.9 795.3,626.4 791.4,616.5 788.5,606.5 786.7,596.9 786.1,587.8 786.7,579.5 788.5,572.3 791.4,566.5 795.3,562.1 800.2,559.3 805.9,558.3 812.1,559.0 818.7,561.4 825.6,565.4 832.5,571.0 839.1,577.9 845.4,585.9 851.0,594.9 855.9,604.4 859.8,614.3 862.7,624.3 864.5,633.9 865.1,643.0" fill="#7db4ec" stroke="#2d5ea8" stroke-width="0.8" opacity="0.25" /><polygon points="858.5,643.0 857.9,651.3 856.1,658.5 853.2,664.3 849.3,668.7 844.4,671.5 838.8,672.5 832.5,671.8 825.9,669.4 819.0,665.4 812.1,659.8 805.5,652.9 799.2,644.9 793.6,635.9 788.7,626.4 784.8,616.5 781.9,606.5 780.1,596.9 779.5,587.8 780.1,579.5 781.9,572.3 784.8,566.5 788.7,562.1 793.6,559.3 799.2,558.3 805.5,559.0 812.1,561.4 819.0,565.4 825.9,571.0 832.5,577.9 838.8,585.9 844.4,594.9 849.3,604.4 853.2,614.3 856.1,624.3 857.9,633.9 858.5,643.0" fill="#86b9ec" stroke="none" stroke-width="1" opacity="0.12" /><polygon points="836.4,627.6 836.1,631.2 835.3,634.4 834.1,636.9 832.3,638.9 830.2,640.1 827.7,640.5 824.9,640.2 822.0,639.2 819.0,637.4 816.0,635.0 813.1,631.9 810.3,628.4 807.8,624.4 805.7,620.2 803.9,615.9 802.7,611.5 801.9,607.2 801.6,603.2 801.9,599.6 802.7,596.4 803.9,593.9 805.7,591.9 807.8,590.7 810.3,590.3 813.1,590.6 816.0,591.6 819.0,593.4 822.0,595.8 824.9,598.9 827.7,602.4 830.2,606.4 832.3,610.6 834.1,614.9 835.3,619.3 836.1,623.6 836.4,627.6" fill="#6aa8e6" stroke="none" stroke-width="1" opacity="0.5" /><polygon points="827.2,566.6 829.5,568.3 831.7,570.3 833.9,572.3 836.1,574.5 838.2,576.9 840.3,579.3 842.4,581.9 844.4,584.6 846.4,587.4 848.2,590.3 850.0,593.2 851.8,596.3 853.4,599.4 855.0,602.5 856.4,605.7 857.8,608.9 859.0,612.2 860.2,615.4 861.2,618.7 862.1,621.9 862.9,625.1 863.6,628.3 864.1,631.5 864.6,634.6 864.9,637.6 865.1,640.5 865.1,643.4 865.0,646.2 864.8,648.9 864.5,651.5 864.0,653.9 863.4,656.3 862.7,658.5 861.9,660.6 860.9,662.5 859.9,664.2 840.7,636.9 841.1,636.1 841.6,635.3 841.9,634.4 842.2,633.4 842.5,632.4 842.7,631.3 842.9,630.1 842.9,629.0 843.0,627.7 843.0,626.5 842.9,625.2 842.7,623.8 842.6,622.5 842.3,621.1 842.0,619.7 841.7,618.3 841.3,616.8 840.8,615.4 840.3,614.0 839.8,612.5 839.2,611.1 838.5,609.7 837.8,608.3 837.1,607.0 836.4,605.6 835.6,604.3 834.7,603.1 833.9,601.8 833.0,600.7 832.1,599.5 831.2,598.4 830.2,597.4 829.3,596.4 828.3,595.5 827.3,594.7 826.3,593.9" fill="none" stroke="#1f3f78" stroke-width="0.8" opacity="0.7" /><polygon points="857.3,667.4 856.0,668.6 854.6,669.7 853.1,670.6 851.5,671.3 849.9,671.8 848.1,672.2 846.4,672.5 844.5,672.5 842.6,672.4 840.7,672.2 838.7,671.7 836.7,671.1 834.6,670.4 832.5,669.5 830.4,668.4 828.3,667.2 826.2,665.8 824.1,664.3 821.9,662.6 819.8,660.8 817.7,658.9 815.6,656.8 813.6,654.6 811.6,652.3 809.6,649.9 807.7,647.4 805.8,644.8 804.0,642.2 802.3,639.4 800.6,636.6 799.0,633.7 797.4,630.8 796.0,627.8 794.6,624.7 793.3,621.7 792.2,618.6 810.9,616.8 811.4,618.2 812.0,619.5 812.6,620.8 813.2,622.2 813.9,623.4 814.6,624.7 815.3,626.0 816.1,627.2 816.9,628.4 817.7,629.5 818.6,630.6 819.4,631.7 820.3,632.7 821.2,633.6 822.1,634.5 823.1,635.4 824.0,636.2 824.9,636.9 825.9,637.6 826.8,638.2 827.7,638.7 828.6,639.2 829.6,639.6 830.5,639.9 831.4,640.2 832.2,640.4 833.1,640.5 833.9,640.5 834.7,640.5 835.5,640.4 836.3,640.2 837.0,640.0 837.7,639.7 838.3,639.3 839.0,638.8 839.5,638.3" fill="none" stroke="#1f3f78" stroke-width="0.8" opacity="0.7" /><polygon points="790.2,612.9 789.3,609.8 788.5,606.6 787.8,603.5 787.2,600.4 786.8,597.4 786.4,594.4 786.2,591.5 786.1,588.7 786.1,585.9 786.3,583.3 786.5,580.7 786.9,578.2 787.4,575.9 788.0,573.7 788.8,571.6 789.6,569.6 790.6,567.8 791.6,566.1 792.8,564.6 794.1,563.2 795.4,562.0 796.9,561.0 798.4,560.1 800.0,559.4 801.8,558.8 803.5,558.5 805.4,558.3 807.3,558.3 809.2,558.4 811.3,558.8 813.3,559.3 815.4,560.0 817.5,560.8 819.7,561.8 821.9,563.0 824.1,564.4 824.9,592.9 824.0,592.3 823.0,591.8 822.1,591.4 821.1,591.0 820.2,590.7 819.3,590.5 818.4,590.3 817.5,590.3 816.7,590.3 815.9,590.4 815.1,590.5 814.4,590.8 813.6,591.1 813.0,591.5 812.3,591.9 811.7,592.4 811.2,593.0 810.6,593.7 810.2,594.5 809.8,595.3 809.4,596.1 809.1,597.0 808.8,598.0 808.6,599.1 808.4,600.1 808.3,601.3 808.2,602.4 808.2,603.6 808.3,604.9 808.4,606.2 808.5,607.5 808.7,608.8 809.0,610.2 809.3,611.5 809.6,612.9 810.0,614.3" fill="none" stroke="#1f3f78" stroke-width="0.8" opacity="0.7" /><polygon points="820.6,566.6 822.9,568.3 825.1,570.3 827.3,572.3 829.5,574.5 831.6,576.9 833.7,579.3 835.8,581.9 837.8,584.6 839.8,587.4 841.6,590.3 843.4,593.2 845.2,596.3 846.8,599.4 848.4,602.5 849.8,605.7 851.2,608.9 852.4,612.2 853.6,615.4 854.6,618.7 855.5,621.9 856.3,625.1 857.0,628.3 857.5,631.5 858.0,634.6 858.3,637.6 858.5,640.5 858.5,643.4 858.4,646.2 858.2,648.9 857.9,651.5 857.4,653.9 856.8,656.3 856.1,658.5 855.3,660.6 854.3,662.5 853.3,664.2 834.1,636.9 834.5,636.1 835.0,635.3 835.3,634.4 835.6,633.4 835.9,632.4 836.1,631.3 836.3,630.1 836.3,629.0 836.4,627.7 836.4,626.5 836.3,625.2 836.1,623.8 836.0,622.5 835.7,621.1 835.4,619.7 835.1,618.3 834.7,616.8 834.2,615.4 833.7,614.0 833.2,612.5 832.6,611.1 831.9,609.7 831.2,608.3 830.5,607.0 829.8,605.6 829.0,604.3 828.1,603.1 827.3,601.8 826.4,600.7 825.5,599.5 824.6,598.4 823.6,597.4 822.7,596.4 821.7,595.5 820.7,594.7 819.7,593.9" fill="#6ea9e6" stroke="none" stroke-width="1" opacity="0.25" /><polygon points="820.6,566.6 822.9,568.3 825.1,570.3 827.3,572.3 829.5,574.5 831.6,576.9 833.7,579.3 835.8,581.9 837.8,584.6 839.8,587.4 841.6,590.3 843.4,593.2 845.2,596.3 846.8,599.4 848.4,602.5 849.8,605.7 851.2,608.9 852.4,612.2 853.6,615.4 854.6,618.7 855.5,621.9 856.3,625.1 857.0,628.3 857.5,631.5 858.0,634.6 858.3,637.6 858.5,640.5 858.5,643.4 858.4,646.2 858.2,648.9 857.9,651.5 857.4,653.9 856.8,656.3 856.1,658.5 855.3,660.6 854.3,662.5 853.3,664.2 834.1,636.9 834.5,636.1 835.0,635.3 835.3,634.4 835.6,633.4 835.9,632.4 836.1,631.3 836.3,630.1 836.3,629.0 836.4,627.7 836.4,626.5 836.3,625.2 836.1,623.8 836.0,622.5 835.7,621.1 835.4,619.7 835.1,618.3 834.7,616.8 834.2,615.4 833.7,614.0 833.2,612.5 832.6,611.1 831.9,609.7 831.2,608.3 830.5,607.0 829.8,605.6 829.0,604.3 828.1,603.1 827.3,601.8 826.4,600.7 825.5,599.5 824.6,598.4 823.6,597.4 822.7,596.4 821.7,595.5 820.7,594.7 819.7,593.9" fill="none" stroke="#121a28" stroke-width="1.35" /><line x1="820.6" y1="566.6" x2="827.2" y2="563.4" stroke="#1a2a48" stroke-width="0.9" opacity="0.8" /><line x1="853.3" y1="664.2" x2="859.9" y2="661.0" stroke="#1a2a48" stroke-width="0.9" opacity="0.8" /><line x1="819.7" y1="593.9" x2="826.3" y2="590.7" stroke="#1a2a48" stroke-width="0.9" opacity="0.8" /><line x1="834.1" y1="636.9" x2="840.7" y2="633.7" stroke="#1a2a48" stroke-width="0.9" opacity="0.8" /><polygon points="850.7,667.4 849.4,668.6 848.0,669.7 846.5,670.6 844.9,671.3 843.3,671.8 841.5,672.2 839.8,672.5 837.9,672.5 836.0,672.4 834.1,672.2 832.1,671.7 830.1,671.1 828.0,670.4 825.9,669.5 823.8,668.4 821.7,667.2 819.6,665.8 817.5,664.3 815.3,662.6 813.2,660.8 811.1,658.9 809.0,656.8 807.0,654.6 805.0,652.3 803.0,649.9 801.1,647.4 799.2,644.8 797.4,642.2 795.7,639.4 794.0,636.6 792.4,633.7 790.8,630.8 789.4,627.8 788.0,624.7 786.7,621.7 785.6,618.6 804.3,616.8 804.8,618.2 805.4,619.5 806.0,620.8 806.6,622.2 807.3,623.4 808.0,624.7 808.7,626.0 809.5,627.2 810.3,628.4 811.1,629.5 812.0,630.6 812.8,631.7 813.7,632.7 814.6,633.6 815.5,634.5 816.5,635.4 817.4,636.2 818.3,636.9 819.3,637.6 820.2,638.2 821.1,638.7 822.0,639.2 823.0,639.6 823.9,639.9 824.8,640.2 825.6,640.4 826.5,640.5 827.3,640.5 828.1,640.5 828.9,640.4 829.7,640.2 830.4,640.0 831.1,639.7 831.7,639.3 832.4,638.8 832.9,638.3" fill="#6ea9e6" stroke="none" stroke-width="1" opacity="0.25" /><polygon points="850.7,667.4 849.4,668.6 848.0,669.7 846.5,670.6 844.9,671.3 843.3,671.8 841.5,672.2 839.8,672.5 837.9,672.5 836.0,672.4 834.1,672.2 832.1,671.7 830.1,671.1 828.0,670.4 825.9,669.5 823.8,668.4 821.7,667.2 819.6,665.8 817.5,664.3 815.3,662.6 813.2,660.8 811.1,658.9 809.0,656.8 807.0,654.6 805.0,652.3 803.0,649.9 801.1,647.4 799.2,644.8 797.4,642.2 795.7,639.4 794.0,636.6 792.4,633.7 790.8,630.8 789.4,627.8 788.0,624.7 786.7,621.7 785.6,618.6 804.3,616.8 804.8,618.2 805.4,619.5 806.0,620.8 806.6,622.2 807.3,623.4 808.0,624.7 808.7,626.0 809.5,627.2 810.3,628.4 811.1,629.5 812.0,630.6 812.8,631.7 813.7,632.7 814.6,633.6 815.5,634.5 816.5,635.4 817.4,636.2 818.3,636.9 819.3,637.6 820.2,638.2 821.1,638.7 822.0,639.2 823.0,639.6 823.9,639.9 824.8,640.2 825.6,640.4 826.5,640.5 827.3,640.5 828.1,640.5 828.9,640.4 829.7,640.2 830.4,640.0 831.1,639.7 831.7,639.3 832.4,638.8 832.9,638.3" fill="none" stroke="#121a28" stroke-width="1.35" /><line x1="850.7" y1="667.4" x2="857.3" y2="664.2" stroke="#1a2a48" stroke-width="0.9" opacity="0.8" /><line x1="785.6" y1="618.6" x2="792.2" y2="615.4" stroke="#1a2a48" stroke-width="0.9" opacity="0.8" /><line x1="832.9" y1="638.3" x2="839.5" y2="635.1" stroke="#1a2a48" stroke-width="0.9" opacity="0.8" /><line x1="804.3" y1="616.8" x2="810.9" y2="613.6" stroke="#1a2a48" stroke-width="0.9" opacity="0.8" /><polygon points="783.6,612.9 782.7,609.8 781.9,606.6 781.2,603.5 780.6,600.4 780.2,597.4 779.8,594.4 779.6,591.5 779.5,588.7 779.5,585.9 779.7,583.3 779.9,580.7 780.3,578.2 780.8,575.9 781.4,573.7 782.2,571.6 783.0,569.6 784.0,567.8 785.0,566.1 786.2,564.6 787.5,563.2 788.8,562.0 790.3,561.0 791.8,560.1 793.4,559.4 795.2,558.8 796.9,558.5 798.8,558.3 800.7,558.3 802.6,558.4 804.7,558.8 806.7,559.3 808.8,560.0 810.9,560.8 813.1,561.8 815.3,563.0 817.5,564.4 818.3,592.9 817.4,592.3 816.4,591.8 815.5,591.4 814.5,591.0 813.6,590.7 812.7,590.5 811.8,590.3 810.9,590.3 810.1,590.3 809.3,590.4 808.5,590.5 807.8,590.8 807.0,591.1 806.4,591.5 805.7,591.9 805.1,592.4 804.6,593.0 804.0,593.7 803.6,594.5 803.2,595.3 802.8,596.1 802.5,597.0 802.2,598.0 802.0,599.1 801.8,600.1 801.7,601.3 801.6,602.4 801.6,603.6 801.7,604.9 801.8,606.2 801.9,607.5 802.1,608.8 802.4,610.2 802.7,611.5 803.0,612.9 803.4,614.3" fill="#6ea9e6" stroke="none" stroke-width="1" opacity="0.25" /><polygon points="783.6,612.9 782.7,609.8 781.9,606.6 781.2,603.5 780.6,600.4 780.2,597.4 779.8,594.4 779.6,591.5 779.5,588.7 779.5,585.9 779.7,583.3 779.9,580.7 780.3,578.2 780.8,575.9 781.4,573.7 782.2,571.6 783.0,569.6 784.0,567.8 785.0,566.1 786.2,564.6 787.5,563.2 788.8,562.0 790.3,561.0 791.8,560.1 793.4,559.4 795.2,558.8 796.9,558.5 798.8,558.3 800.7,558.3 802.6,558.4 804.7,558.8 806.7,559.3 808.8,560.0 810.9,560.8 813.1,561.8 815.3,563.0 817.5,564.4 818.3,592.9 817.4,592.3 816.4,591.8 815.5,591.4 814.5,591.0 813.6,590.7 812.7,590.5 811.8,590.3 810.9,590.3 810.1,590.3 809.3,590.4 808.5,590.5 807.8,590.8 807.0,591.1 806.4,591.5 805.7,591.9 805.1,592.4 804.6,593.0 804.0,593.7 803.6,594.5 803.2,595.3 802.8,596.1 802.5,597.0 802.2,598.0 802.0,599.1 801.8,600.1 801.7,601.3 801.6,602.4 801.6,603.6 801.7,604.9 801.8,606.2 801.9,607.5 802.1,608.8 802.4,610.2 802.7,611.5 803.0,612.9 803.4,614.3" fill="none" stroke="#121a28" stroke-width="1.35" /><line x1="783.6" y1="612.9" x2="790.2" y2="609.7" stroke="#1a2a48" stroke-width="0.9" opacity="0.8" /><line x1="817.5" y1="564.4" x2="824.1" y2="561.2" stroke="#1a2a48" stroke-width="0.9" opacity="0.8" /><line x1="803.4" y1="614.3" x2="810.0" y2="611.1" stroke="#1a2a48" stroke-width="0.9" opacity="0.8" /><line x1="818.3" y1="592.9" x2="824.9" y2="589.7" stroke="#1a2a48" stroke-width="0.9" opacity="0.8" /><g fill="none" stroke="#0b1220" stroke-width="1.35" stroke-linecap="round" stroke-linejoin="round"><path d="M1101.6 174.5 Q1110.4 170.6 1120.4 176.4 L1375.2 357.8 Q1399.6 375.5 1400.1 403 L1400.1 485 Q1399.8 500.5 1388 503"/><path d="M910.3 733.5 Q900.1 741.4 887.5 733.5 L634.3 550.1 Q609.2 531.5 608.8 501.4 L608.2 431 Q608.6 411.4 618.9 409.2 Q626 408.6 632.7 413.3 L893 594.5 Q911.6 608 912.6 640 L912.7 725.6 Q912 735 900.1 738.6"/><path d="M635.2 413.9 L1110.4 182 L1120.4 178.3"/><path d="M893 594.2 L1064 509.6 M1186 450.2 L1374.5 358.4"/><path d="M1064 509.6 L1186 450.2" stroke-width="0.9" opacity="0.4"/><path d="M912.6 644 L1400 408"/><path d="M913.5 717.8 L1399 487.6"/></g><g fill="none" stroke="#2c5aa0" stroke-width="0.9" opacity="0.85"><path d="M641.5 417.7 L1112.9 189 "/><path d="M1102 175.4 Q1096.6 180 1096.2 188"/><path d="M1112.9 186.5 L1367.3 369 Q1386 383.5 1386.8 403 L1386.8 483"/><path d="M621.4 500 L621.4 430 Q621.6 415.6 631.5 414.6"/><path d="M621.7 500 Q622.4 530 645.3 547 L889 722.5"/><path d="M900 601 L1367.8 368.5"/><path d="M912.6 637.3 L1386.8 407.8"/><path d="M913.5 709.8 L1386.8 484"/></g><polygon points="978.6,445.6 1097.0,388.8 1186.4,452.0 1069.5,513.8" fill="none" stroke="#d3e2f1" stroke-width="1.7" opacity="0.95" /><polygon points="978.6,451.1 1097.0,394.3 1186.4,457.5 1069.5,519.3" fill="none" stroke="#d3e2f1" stroke-width="1.4" opacity="0.85" /></svg>
<div class="panel" style="left:440px;top:8px;width:479px;height:127px"></div>
<div class="ln" style="left:441px;top:69px;width:479px;height:1px;background:#e4e4e4"></div>
<span class="t" style="left:457.00px;top:30.1px;font-size:20.5px;transform:scaleX(0.9338);color:#2b2b2b;font-weight:700;">2 Selected contacts</span>
<div class="a" style="left:817px;top:17px;width:44px;height:44px;border-radius:5px;background:#3a76aa"></div>
<svg class="a" style="left:817px;top:17px" width="44" height="44" viewBox="817 17 44 44"><path d="M830.6 37.4 L836.5 43.2 L847 32.6" fill="none" stroke="#fff" stroke-width="1.7"/></svg>
<div class="a" style="left:866px;top:17px;width:44px;height:44px;border-radius:5px;background:#fff;border:1px solid #e2e2e2;box-sizing:border-box"></div>
<svg class="a" style="left:866px;top:17px" width="44" height="44" viewBox="866 17 44 44"><path d="M883 33 L894 43.8 M894 33 L883 43.8" fill="none" stroke="#5a5f63" stroke-width="1.4"/></svg>
<span class="t" style="left:456.04px;top:94.6px;font-size:18px;transform:scaleX(1.0211);color:#383838;">Interface type</span>
<span class="t" style="left:724.53px;top:94.3px;font-size:18px;transform:scaleX(0.9950);color:#383838;">Coupled interface</span>
<div class="ln" style="left:719px;top:124px;width:185px;height:1px;background:#d9d9d9"></div>
<svg class="a" style="left:887.25px;top:99.25px" width="12.5" height="7.5" viewBox="-1 -1 12.5 7.5"><path d="M0 0 L5.25 5.5 L10.5 0" fill="none" stroke="#555" stroke-width="1.3"/></svg>
<svg class="a" style="left:950px;top:0" width="620" height="80" viewBox="950 0 620 80"><line x1="957" y1="13" x2="957" y2="66" stroke="#ebebeb" stroke-width="1.2"/><line x1="1315.5" y1="13" x2="1315.5" y2="66" stroke="#ebebeb" stroke-width="1.2"/><line x1="1371" y1="13" x2="1371" y2="66" stroke="#ebebeb" stroke-width="1.2"/><line x1="1431.5" y1="13" x2="1431.5" y2="66" stroke="#ebebeb" stroke-width="1.2"/><line x1="1492" y1="13" x2="1492" y2="66" stroke="#ebebeb" stroke-width="1.2"/><rect x="1018.6" y="13.4" width="53" height="53" rx="6" fill="#f9f9f9" stroke="#bcd7ec" stroke-width="1.1"/><rect x="1256.6" y="13.4" width="53" height="53" rx="6" fill="#f9f9f9" stroke="#bcd7ec" stroke-width="1.1"/><polygon points="984.5,29.6 993.5,34.8 984.5,40.0 975.5,34.8" fill="#f1f2f1"/><polygon points="975.5,34.8 984.5,40.0 984.5,50.2 975.5,45.0" fill="#a3aaa6"/><polygon points="984.5,40.0 993.5,34.8 993.5,45.0 984.5,50.2" fill="#d6d9d7"/><g fill="none" stroke="#4d4f4e" stroke-width="1.1" stroke-linejoin="round"><polygon points="984.5,29.6 993.5,34.8 993.5,45.0 984.5,50.2 975.5,45.0 975.5,34.8"/><polyline points="975.5,34.8 984.5,40.0 993.5,34.8"/><line x1="984.5" y1="40" x2="984.5" y2="50"/></g><line x1="984.5" y1="33.5" x2="984.5" y2="36.5" stroke="#333" stroke-width="1"/><path d="M998.2 58.400000000000006 H1002.8000000000001 V54.2" fill="none" stroke="#8b9499" stroke-width="1.1"/><polygon points="1045.1,30.4 1053.7,35.4 1045.1,40.4 1036.5,35.4" fill="#f2aea6"/><polygon points="1036.5,35.4 1045.1,40.4 1045.1,50.5 1036.5,45.5" fill="#d8473a"/><polygon points="1045.1,40.4 1053.7,35.4 1053.7,45.5 1045.1,50.5" fill="#ee7d70"/><g fill="none" stroke="#151515" stroke-width="1.1"><polygon points="1045.1,30.4 1053.7,35.4 1053.7,45.5 1045.1,50.5 1036.5,45.5 1036.5,35.4"/><polyline points="1036.5,35.4 1045.1,40.4 1053.7,35.4"/><line x1="1045.1" y1="40.4" x2="1045.1" y2="50.5"/></g><circle cx="1045.1" cy="30.4" r="1.8" fill="#0b0b0b"/><circle cx="1053.7" cy="35.4" r="1.8" fill="#0b0b0b"/><circle cx="1045.1" cy="40.4" r="1.8" fill="#0b0b0b"/><circle cx="1036.5" cy="35.4" r="1.8" fill="#0b0b0b"/><circle cx="1036.5" cy="45.5" r="1.8" fill="#0b0b0b"/><circle cx="1045.1" cy="50.5" r="1.8" fill="#0b0b0b"/><circle cx="1053.7" cy="45.5" r="1.8" fill="#0b0b0b"/><polygon points="1104.0,30.6 1112.5,35.5 1112.5,45.6 1104.0,50.5 1095.5,45.6 1095.5,35.5" fill="#fbfbfb"/><polygon points="1095.5,35.5 1104.0,40.4 1104.0,50.5 1095.5,45.6" fill="#d8473a"/><g fill="none" stroke="#151515" stroke-width="1.1"><polygon points="1104.0,30.6 1112.5,35.5 1112.5,45.6 1104.0,50.5 1095.5,45.6 1095.5,35.5"/><polyline points="1095.5,35.5 1104.0,40.4 1112.5,35.5"/><line x1="1104" y1="40.4" x2="1104" y2="50.5"/></g><circle cx="1104.0" cy="30.6" r="1.8" fill="#0b0b0b"/><circle cx="1112.5" cy="35.5" r="1.8" fill="#0b0b0b"/><circle cx="1104.0" cy="40.4" r="1.8" fill="#0b0b0b"/><circle cx="1095.5" cy="35.5" r="1.8" fill="#0b0b0b"/><circle cx="1095.5" cy="45.6" r="1.8" fill="#0b0b0b"/><circle cx="1104.0" cy="50.5" r="1.8" fill="#0b0b0b"/><circle cx="1112.5" cy="45.6" r="1.8" fill="#0b0b0b"/><g fill="none" stroke="#e0574b" stroke-width="1"><polygon points="1163.0,30.8 1171.5,35.7 1171.5,45.7 1163.0,50.6 1154.5,45.7 1154.5,35.7"/><polyline points="1154.5,35.7 1163.0,40.6 1171.5,35.7"/><line x1="1163" y1="40.6" x2="1163" y2="50.6" stroke-dasharray="1.2 0.8" stroke-width="1.4"/></g><circle cx="1163.0" cy="30.8" r="1.9" fill="#0b0b0b"/><circle cx="1171.5" cy="35.7" r="1.9" fill="#0b0b0b"/><circle cx="1163.0" cy="40.6" r="1.9" fill="#0b0b0b"/><circle cx="1154.5" cy="35.7" r="1.9" fill="#0b0b0b"/><circle cx="1154.5" cy="45.7" r="1.9" fill="#0b0b0b"/><circle cx="1163.0" cy="50.6" r="1.9" fill="#0b0b0b"/><circle cx="1171.5" cy="45.7" r="1.9" fill="#0b0b0b"/><g fill="none" stroke="#1c1c1c" stroke-width="1.1"><polygon points="1222.0,30.8 1230.5,35.7 1230.5,45.7 1222.0,50.6 1213.5,45.7 1213.5,35.7"/><polyline points="1213.5,35.7 1222.0,40.6 1230.5,35.7"/><line x1="1222" y1="40.6" x2="1222" y2="50.6" stroke-width="1.5"/></g><circle cx="1222.0" cy="30.8" r="1.8" fill="#d9392e"/><circle cx="1230.5" cy="35.7" r="1.8" fill="#d9392e"/><circle cx="1222.0" cy="40.6" r="1.8" fill="#d9392e"/><circle cx="1213.5" cy="35.7" r="1.8" fill="#d9392e"/><circle cx="1213.5" cy="45.7" r="1.8" fill="#d9392e"/><circle cx="1222.0" cy="50.6" r="1.8" fill="#d9392e"/><circle cx="1230.5" cy="45.7" r="1.8" fill="#d9392e"/><line x1="1283.4" y1="33" x2="1283.4" y2="50" stroke="#3c3c3c" stroke-width="1.2"/><circle cx="1283.4" cy="33.3" r="5.7" fill="#3c3c3c"/><circle cx="1283.4" cy="50.4" r="2" fill="#3c3c3c"/><rect x="1333.6" y="33" width="16.6" height="12" fill="none" stroke="#111" stroke-width="1.7" stroke-dasharray="4 2.6" stroke-dashoffset="2"/><path d="M1346.6 41.6 L1346.6 51.4 L1348.9 49.2 L1350.6 52.6 L1352.2 51.8 L1350.6 48.6 L1353.6 48.4 Z" fill="#111" stroke="#f5f5f5" stroke-width="0.6"/><g fill="none" stroke="#b9c5ca" stroke-width="0.9"><polygon points="1397.8,30.6 1406,35.4 1406,45.6 1401.4,48.6 1393.2,43.6 1393.2,33.2"/><polyline points="1393.2,33.2 1401.4,38 1406,35.4"/><line x1="1401.4" y1="38" x2="1401.4" y2="48.6"/><line x1="1397.3" y1="35.6" x2="1397.3" y2="46.1"/><line x1="1393.2" y1="38.4" x2="1401.4" y2="43.2"/><line x1="1401.4" y1="43.2" x2="1406" y2="40.4"/><line x1="1397.8" y1="30.6" x2="1397.8" y2="41"/><line x1="1397.8" y1="41" x2="1406" y2="45.6"/><line x1="1397.8" y1="41" x2="1393.2" y2="43.6"/></g><circle cx="1397.8" cy="30.6" r="1.3" fill="#f5f5f5" stroke="#b9c5ca" stroke-width="0.9"/><circle cx="1406" cy="35.4" r="1.3" fill="#f5f5f5" stroke="#b9c5ca" stroke-width="0.9"/><circle cx="1406" cy="45.6" r="1.3" fill="#f5f5f5" stroke="#b9c5ca" stroke-width="0.9"/><circle cx="1401.4" cy="48.6" r="1.3" fill="#f5f5f5" stroke="#b9c5ca" stroke-width="0.9"/><circle cx="1393.2" cy="43.6" r="1.3" fill="#f5f5f5" stroke="#b9c5ca" stroke-width="0.9"/><circle cx="1393.2" cy="33.2" r="1.3" fill="#f5f5f5" stroke="#b9c5ca" stroke-width="0.9"/><circle cx="1401.4" cy="38" r="1.3" fill="#f5f5f5" stroke="#b9c5ca" stroke-width="0.9"/><g fill="none" stroke="#444" stroke-width="1.05" stroke-linejoin="round" stroke-linecap="round"><path d="M1456 43.5 V38.5 C1456 33 1459.5 30.4 1464.3 29 L1469.8 31.6 V41.6 L1460 47 L1456 45 Z"/><path d="M1460 46.8 V41 C1460 36.2 1463.6 33 1469.8 31.6"/><path d="M1456 43.4 L1448.2 47.8 L1452.2 50.6 L1460 46.8"/><path d="M1450.2 46.8 L1454 49.6 M1452 45.8 L1455.8 48.6 M1453.8 44.8 L1457.6 47.8" stroke-width="0.9"/><path d="M1456 39.5 L1460 41.6" stroke-width="0.7"/></g><g fill="none" stroke="#444" stroke-width="1.1" stroke-linecap="round"><path d="M1507.2 47.2 L1523.2 31.2 A2.1 2.1 0 0 1 1526.2 34.2 L1510.2 50.2 A2.1 2.1 0 0 1 1507.2 47.2 Z"/><path d="M1517.6 36.8 L1520.6 39.8"/><path d="M1507.6 34.2 H1514 M1510.8 31 V37.4"/><path d="M1515.4 29.8 H1519.8 M1517.6 27.6 V32"/></g><path d="M1533.2 58.400000000000006 H1537.8 V54.2" fill="none" stroke="#8b9499" stroke-width="1.1"/></svg>
<span class="t" style="left:1520.80px;top:39.9px;font-size:11.5px;transform:scaleX(1.1077);color:#3a3a3a;">AI</span>
<div class="panel" style="left:1582px;top:8px;width:322px;height:570px;overflow:hidden"></div>
<div class="a" style="left:1583px;top:9px;width:322px;height:570px;overflow:hidden">
<svg class="a" style="left:17.450000000000045px;top:20.599999999999998px" width="14.5" height="8.4" viewBox="-1 -1 14.5 8.4"><path d="M0 0 L6.25 6.4 L12.5 0" fill="none" stroke="#555" stroke-width="1.4"/></svg>
<span class="t" style="left:43.36px;top:15.1px;font-size:18px;transform:scaleX(0.9568);color:#2b2b2b;-webkit-text-stroke:0.5px #2b2b2b;">GEOMETRY</span>
<div class="ln" style="left:24px;top:51px;width:1px;height:10px;background:#e4e4e4"></div>
<div class="eb" style="left:17px;top:61px"></div><svg class="a" style="left:18.5px;top:62.5px" width="12" height="12" viewBox="-6 -6 12 12"><path d="M-3.5 0 H3.5" stroke="#444" stroke-width="1.5" fill="none"/></svg>
<span class="t" style="left:42.70px;top:59.4px;font-size:18px;transform:scaleX(0.9980);color:#2b2b2b;-webkit-text-stroke:0.5px #2b2b2b;">Electronics Box</span>
<div class="ln" style="left:57px;top:90px;width:1px;height:500px;background:#e2e2e2"></div>
<div class="ln" style="left:58px;top:107px;width:6px;height:1px;background:#e2e2e2"></div>
<div class="a" style="left:80px;top:96.3px"><svg width="19" height="23" viewBox="0 0 19 23"><polygon points="9.50,0.20 18.90,5.62 9.50,11.05 0.10,5.62" fill="#ececec"/><polygon points="0.10,5.62 9.50,11.05 9.50,22.25 0.10,16.82" fill="#8f9892"/><polygon points="9.50,11.05 18.90,5.62 18.90,16.82 9.50,22.25" fill="#cdd0ce"/></svg></div>
<span class="t" style="left:109.23px;top:98.6px;font-size:18px;transform:scaleX(0.9980);color:#383838;">Housing</span>
<div class="ln" style="left:58px;top:146px;width:6px;height:1px;background:#e2e2e2"></div>
<div class="a" style="left:80px;top:134.8px"><svg width="19" height="23" viewBox="0 0 19 23"><polygon points="9.50,0.20 18.90,5.62 9.50,11.05 0.10,5.62" fill="#ececec"/><polygon points="0.10,5.62 9.50,11.05 9.50,22.25 0.10,16.82" fill="#8f9892"/><polygon points="9.50,11.05 18.90,5.62 18.90,16.82 9.50,22.25" fill="#cdd0ce"/></svg></div>
<span class="t" style="left:108.88px;top:137.1px;font-size:18px;transform:scaleX(0.9601);color:#383838;">Small chip</span>
<div class="ln" style="left:58px;top:184px;width:6px;height:1px;background:#e2e2e2"></div>
<div class="a" style="left:80px;top:173.3px"><svg width="19" height="23" viewBox="0 0 19 23"><polygon points="9.50,0.20 18.90,5.62 9.50,11.05 0.10,5.62" fill="#ececec"/><polygon points="0.10,5.62 9.50,11.05 9.50,22.25 0.10,16.82" fill="#8f9892"/><polygon points="9.50,11.05 18.90,5.62 18.90,16.82 9.50,22.25" fill="#cdd0ce"/></svg></div>
<span class="t" style="left:108.88px;top:175.6px;font-size:18px;transform:scaleX(0.9601);color:#383838;">Small chip</span>
<div class="ln" style="left:58px;top:223px;width:6px;height:1px;background:#e2e2e2"></div>
<div class="a" style="left:80px;top:211.8px"><svg width="19" height="23" viewBox="0 0 19 23"><polygon points="9.50,0.20 18.90,5.62 9.50,11.05 0.10,5.62" fill="#ececec"/><polygon points="0.10,5.62 9.50,11.05 9.50,22.25 0.10,16.82" fill="#8f9892"/><polygon points="9.50,11.05 18.90,5.62 18.90,16.82 9.50,22.25" fill="#cdd0ce"/></svg></div>
<span class="t" style="left:108.88px;top:214.1px;font-size:18px;transform:scaleX(0.9601);color:#383838;">Small chip</span>
<div class="ln" style="left:58px;top:261px;width:6px;height:1px;background:#e2e2e2"></div>
<div class="a" style="left:80px;top:250.3px"><svg width="19" height="23" viewBox="0 0 19 23"><polygon points="9.50,0.20 18.90,5.62 9.50,11.05 0.10,5.62" fill="#ececec"/><polygon points="0.10,5.62 9.50,11.05 9.50,22.25 0.10,16.82" fill="#8f9892"/><polygon points="9.50,11.05 18.90,5.62 18.90,16.82 9.50,22.25" fill="#cdd0ce"/></svg></div>
<span class="t" style="left:108.88px;top:252.6px;font-size:18px;transform:scaleX(0.9601);color:#383838;">Small chip</span>
<div class="ln" style="left:58px;top:300px;width:6px;height:1px;background:#e2e2e2"></div>
<div class="a" style="left:80px;top:288.8px"><svg width="19" height="23" viewBox="0 0 19 23"><polygon points="9.50,0.20 18.90,5.62 9.50,11.05 0.10,5.62" fill="#ececec"/><polygon points="0.10,5.62 9.50,11.05 9.50,22.25 0.10,16.82" fill="#8f9892"/><polygon points="9.50,11.05 18.90,5.62 18.90,16.82 9.50,22.25" fill="#cdd0ce"/></svg></div>
<span class="t" style="left:108.88px;top:291.1px;font-size:18px;transform:scaleX(0.9601);color:#383838;">Small chip</span>
<div class="ln" style="left:58px;top:338px;width:6px;height:1px;background:#e2e2e2"></div>
<div class="a" style="left:80px;top:327.3px"><svg width="19" height="23" viewBox="0 0 19 23"><polygon points="9.50,0.20 18.90,5.62 9.50,11.05 0.10,5.62" fill="#ececec"/><polygon points="0.10,5.62 9.50,11.05 9.50,22.25 0.10,16.82" fill="#8f9892"/><polygon points="9.50,11.05 18.90,5.62 18.90,16.82 9.50,22.25" fill="#cdd0ce"/></svg></div>
<span class="t" style="left:108.88px;top:329.6px;font-size:18px;transform:scaleX(0.9601);color:#383838;">Small chip</span>
<div class="ln" style="left:58px;top:377px;width:6px;height:1px;background:#e2e2e2"></div>
<div class="a" style="left:80px;top:365.8px"><svg width="19" height="23" viewBox="0 0 19 23"><polygon points="9.50,0.20 18.90,5.62 9.50,11.05 0.10,5.62" fill="#ececec"/><polygon points="0.10,5.62 9.50,11.05 9.50,22.25 0.10,16.82" fill="#8f9892"/><polygon points="9.50,11.05 18.90,5.62 18.90,16.82 9.50,22.25" fill="#cdd0ce"/></svg></div>
<span class="t" style="left:109.28px;top:368.1px;font-size:18px;transform:scaleX(0.9630);color:#383838;">Medium capaci…</span>
<div class="ln" style="left:58px;top:415px;width:6px;height:1px;background:#e2e2e2"></div>
<div class="a" style="left:80px;top:404.3px"><svg width="19" height="23" viewBox="0 0 19 23"><polygon points="9.50,0.20 18.90,5.62 9.50,11.05 0.10,5.62" fill="#ececec"/><polygon points="0.10,5.62 9.50,11.05 9.50,22.25 0.10,16.82" fill="#8f9892"/><polygon points="9.50,11.05 18.90,5.62 18.90,16.82 9.50,22.25" fill="#cdd0ce"/></svg></div>
<span class="t" style="left:109.28px;top:406.6px;font-size:18px;transform:scaleX(0.9630);color:#383838;">Medium capaci…</span>
<div class="ln" style="left:58px;top:454px;width:6px;height:1px;background:#e2e2e2"></div>
<div class="a" style="left:80px;top:442.8px"><svg width="19" height="23" viewBox="0 0 19 23"><polygon points="9.50,0.20 18.90,5.62 9.50,11.05 0.10,5.62" fill="#ececec"/><polygon points="0.10,5.62 9.50,11.05 9.50,22.25 0.10,16.82" fill="#8f9892"/><polygon points="9.50,11.05 18.90,5.62 18.90,16.82 9.50,22.25" fill="#cdd0ce"/></svg></div>
<span class="t" style="left:109.28px;top:445.1px;font-size:18px;transform:scaleX(0.9630);color:#383838;">Medium capaci…</span>
<div class="ln" style="left:58px;top:492px;width:6px;height:1px;background:#e2e2e2"></div>
<div class="a" style="left:80px;top:481.3px"><svg width="19" height="23" viewBox="0 0 19 23"><polygon points="9.50,0.20 18.90,5.62 9.50,11.05 0.10,5.62" fill="#ececec"/><polygon points="0.10,5.62 9.50,11.05 9.50,22.25 0.10,16.82" fill="#8f9892"/><polygon points="9.50,11.05 18.90,5.62 18.90,16.82 9.50,22.25" fill="#cdd0ce"/></svg></div>
<span class="t" style="left:108.88px;top:483.6px;font-size:18px;transform:scaleX(0.9663);color:#383838;">Small Capacitor</span>
<div class="ln" style="left:58px;top:531px;width:6px;height:1px;background:#e2e2e2"></div>
<div class="a" style="left:80px;top:519.8px"><svg width="19" height="23" viewBox="0 0 19 23"><polygon points="9.50,0.20 18.90,5.62 9.50,11.05 0.10,5.62" fill="#ececec"/><polygon points="0.10,5.62 9.50,11.05 9.50,22.25 0.10,16.82" fill="#8f9892"/><polygon points="9.50,11.05 18.90,5.62 18.90,16.82 9.50,22.25" fill="#cdd0ce"/></svg></div>
<span class="t" style="left:108.88px;top:522.1px;font-size:18px;transform:scaleX(0.9663);color:#383838;">Small Capacitor</span>
<div class="ln" style="left:58px;top:569px;width:6px;height:1px;background:#e2e2e2"></div>
<div class="a" style="left:80px;top:558.3px"><svg width="19" height="23" viewBox="0 0 19 23"><polygon points="9.50,0.20 18.90,5.62 9.50,11.05 0.10,5.62" fill="#ececec"/><polygon points="0.10,5.62 9.50,11.05 9.50,22.25 0.10,16.82" fill="#8f9892"/><polygon points="9.50,11.05 18.90,5.62 18.90,16.82 9.50,22.25" fill="#cdd0ce"/></svg></div>
<span class="t" style="left:108.88px;top:560.6px;font-size:18px;transform:scaleX(0.9663);color:#383838;">Small Capacitor</span>
</div>
<div class="a" style="left:1882px;top:24px;width:7px;height:61px;border-radius:3.5px;background:#d8dad9"></div>
<div class="a" style="left:1895px;top:24px;width:7px;height:497px;border-radius:3.5px;background:#d8dad9"></div>
<svg class="a" style="left:1878px;top:10px" width="28" height="570" viewBox="1878 10 28 570"><g fill="#d8dad9"><path d="M1881 18.5 L1885.5 13 L1890 18.5 Z"/><path d="M1894 18.5 L1898.5 13 L1903 18.5 Z"/><path d="M1881.5 570.5 L1885.5 575.5 L1889.5 570.5 Z"/><path d="M1894.5 570.5 L1898.5 575.5 L1902.5 570.5 Z"/></g></svg>
<div class="ln" style="left:1574px;top:324px;width:1px;height:22px;background:#cfcfcf"></div>
<div class="ln" style="left:1578px;top:324px;width:1px;height:22px;background:#cfcfcf"></div>
<div class="a" style="left:1748px;top:597px;width:158px;height:55px;box-sizing:border-box;border:1px solid #e9e9e9;border-radius:5px;background:#f6f6f6;box-shadow:0 1px 6px rgba(0,0,0,0.03)"></div>
<svg class="a" style="left:1774px;top:613px" width="28" height="22" viewBox="1774 613 28 22"><g fill="#8c8c8c"><path d="M1777.5 615 H1789.5 A1.8 1.8 0 0 1 1791.3 616.8 V624.4 A1.8 1.8 0 0 1 1789.5 626.2 H1782.6 L1779.6 629 V626.2 H1777.5 A1.8 1.8 0 0 1 1775.7 624.4 V616.8 A1.8 1.8 0 0 1 1777.5 615 Z"/><path d="M1792.6 619.4 H1797 A1.8 1.8 0 0 1 1798.8 621.2 V627.6 A1.8 1.8 0 0 1 1797 629.4 H1796 V632.2 L1793 629.4 H1786.8 A1.8 1.8 0 0 1 1785.2 627.6 H1790.4 A2.2 2.2 0 0 0 1792.6 625.4 Z"/></g></svg>
<span class="t" style="left:1809.60px;top:614.9px;font-size:19px;transform:scaleX(1.0136);color:#8a8d90;">AI Agent</span>
<div class="a" style="left:1824px;top:640px;width:66px;height:66px;border-radius:50%;background:#3671a5;box-shadow:0 4px 22px rgba(0,0,0,0.2)"></div>
<svg class="a" style="left:1824px;top:640px" width="66" height="66" viewBox="1824 640 66 66"><path d="M1846 656.5 H1867 A4.5 4.5 0 0 1 1871.5 661 V688.5 L1863 684.5 H1846 A4.5 4.5 0 0 1 1841.5 680 V661 A4.5 4.5 0 0 1 1846 656.5 Z" fill="#fff"/><path d="M1846.3 675.3 Q1856.5 683 1866.7 675.3" fill="none" stroke="#3671a5" stroke-width="2" stroke-linecap="round"/></svg>
<svg class="a" style="left:1660px;top:700px" width="254" height="255" viewBox="1660 700 254 255"><polygon points="1785.0,754.8 1837.6,792.7 1837.6,859.5 1774.0,889.6 1721.4,854.4 1721.4,785.5" fill="#fafafa"/><g fill="none" stroke="#cfd3d1" stroke-width="0.9" stroke-dasharray="3.2 2.4"><line x1="1785" y1="754.8" x2="1785" y2="821.5"/><line x1="1785" y1="821.5" x2="1721.4" y2="854.4"/><line x1="1785" y1="821.5" x2="1837.6" y2="859.5"/></g><line x1="1714.8" y1="855.7" x2="1806" y2="812" stroke="#b9f2a4" stroke-width="1.1"/><path d="M1813 808.6 L1797.6 813.5 L1799.5 817.5 Z" fill="#b4f09e"/><g fill="none" stroke="#a9afac" stroke-width="1"><polygon points="1785.0,754.8 1837.6,792.7 1837.6,859.5 1774.0,889.6 1721.4,854.4 1721.4,785.5"/><polyline points="1721.4,785.5 1774.0,822.9 1837.6,792.7"/><line x1="1774" y1="822.9" x2="1774" y2="889.6"/></g><line x1="1714.8" y1="855.7" x2="1714.8" y2="765" stroke="#6a6af5" stroke-width="1.1"/><path d="M1714.8 752.5 L1712.7 769 L1716.9 769 Z" fill="#6a6af5"/><line x1="1714.8" y1="855.7" x2="1786" y2="907.2" stroke="#e0564b" stroke-width="1.1"/><path d="M1795 913.8 L1780.8 906.2 L1783.4 902.6 Z" fill="#e0564b"/><g fill="none" stroke="#5d6468" stroke-width="1.3"><path d="M1775.8 722.2 L1782.3 716.2 L1788.8 722.2"/><path d="M1775.8 922.8 L1782.3 928.8 L1788.8 922.8"/><path d="M1681 816 L1675 822.4 L1681 828.8"/><path d="M1883.2 816 L1889.2 822.4 L1883.2 828.8"/></g><g fill="none" stroke="#5d6468" stroke-width="1.15" stroke-linejoin="round"><path d="M1842 755 L1849.6 748 L1857.2 755"/><path d="M1844 753.6 V762 H1847.6 V757 H1851.6 V762 H1855.2 V753.6"/></g><g fill="none" stroke="#848b8f" stroke-width="1.2"><path d="M1710.5 885.5 A8.2 8.2 0 1 1 1703.6 898"/><path d="M1848.5 885.6 A8.2 8.2 0 1 0 1856.6 897.4"/></g><path d="M1700.2 893 L1705.4 890.2 L1704.6 895.6 Z" fill="#5d6468"/><path d="M1861 893 L1855.6 890.6 L1856.8 896 Z" fill="#5d6468"/></svg>
<svg class="a" style="left:800px;top:915px" width="320" height="14" viewBox="800 915 320 14"><path d="M804.7 921.6 V925.6 H1109.2 V921.6" fill="none" stroke="#333" stroke-width="1.9"/></svg>
<span class="t" style="left:935.38px;top:937.6px;font-size:17.5px;transform:scaleX(1.0000);color:#444;">0.1 m</span>
<span class="t" style="left:1709.03px;top:733.1px;font-size:17px;transform:scaleX(1.1307);color:#6a6af5;-webkit-text-stroke:0.45px #6a6af5;">Z</span>
<span class="t" style="left:1799.40px;top:912.1px;font-size:17px;transform:scaleX(1.0541);color:#e0493d;-webkit-text-stroke:0.45px #e0493d;">X</span>
<span class="t" style="left:1820.22px;top:791.6px;font-size:17px;transform:scaleX(1.0000);color:#b4f09e;transform:scaleX(0.9) rotate(18deg);">Y</span>
<span class="t" style="left:1776.5px;top:780.3px;font-size:10px;color:#8d9492;transform-origin:0 0;transform:matrix(0.82,0.52,-0.86,0.5,0,0);letter-spacing:0">TOP</span>
<span class="t" style="left:1734.4px;top:823.6px;font-size:10px;color:#8d9492;transform-origin:0 0;transform:matrix(0.84,0.5,0,1,0,0);letter-spacing:0">RIGHT</span>
<span class="t" style="left:1808.4px;top:824.3px;font-size:10px;color:#8d9492;transform-origin:0 0;transform:matrix(0.2,1,-0.86,0.45,0,0);letter-spacing:0">BACK</span>
</div>
</body></html>
